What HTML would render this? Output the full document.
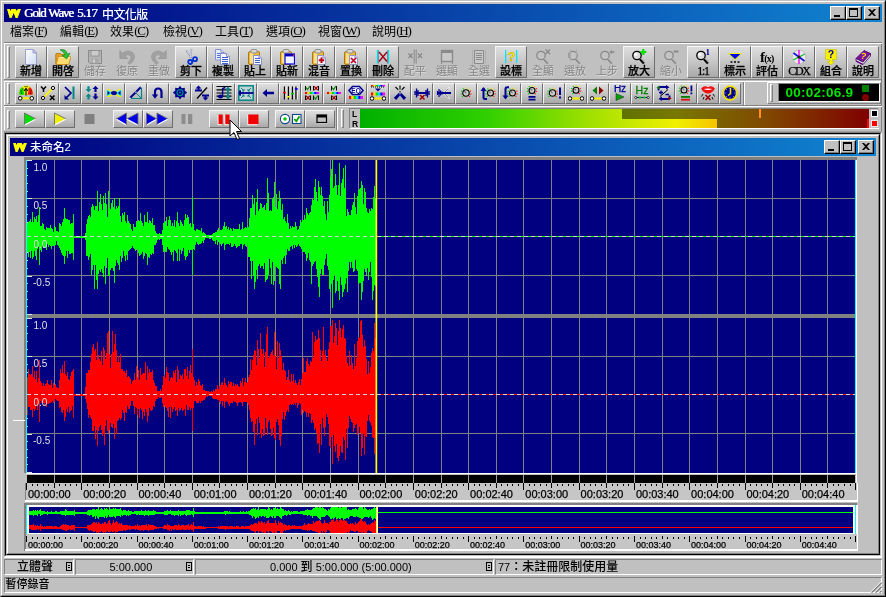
<!DOCTYPE html><html lang="zh-Hant"><head><meta charset="utf-8"><title>GoldWave 5.17</title><style>
html,body{margin:0;padding:0;}
body{width:886px;height:597px;overflow:hidden;background:#c0c0c0;position:relative;
 font-family:"Liberation Serif","Noto Serif CJK SC",serif;font-size:12px;color:#000;}
div,span,svg{position:absolute;box-sizing:border-box;}
.t{white-space:nowrap;line-height:1;}
.sans{font-family:"Liberation Sans","Noto Sans CJK TC",sans-serif;}
.raised{border:1px solid;border-color:#fff #404040 #404040 #fff;}
.btn1{background:linear-gradient(#dedede,#c8c8c8 45%,#a9a9a9);border:1px solid;border-color:#f4f4f4 #6e6e6e #6e6e6e #f4f4f4;}
.cap{background:#c0c0c0;border:1px solid;border-color:#fff #000 #000 #fff;box-shadow:inset -1px -1px 0 #808080;}
.lab{left:0;width:100%;text-align:center;font-size:11px;line-height:12px;white-space:nowrap;font-family:"Liberation Serif","Noto Sans CJK TC",sans-serif;font-weight:500;-webkit-text-stroke:0.25px currentColor;}
.dis{color:#848484;font-weight:400 !important;-webkit-text-stroke:0 !important;text-shadow:0.6px 0.6px 0 #dcdcdc;}
u{text-decoration:underline;}
.cj{font-family:"Liberation Serif","Noto Sans CJK TC",sans-serif;font-weight:400;}
</style></head><body><div id="w" style="left:0;top:0;width:886px;height:597px;will-change:transform;">
<div style="left:0px;top:0px;width:886px;height:597px;border:1px solid;border-color:#c0c0c0 #000 #000 #c0c0c0;"></div>
<div style="left:1px;top:1px;width:884px;height:595px;border:1px solid;border-color:#fff #808080 #808080 #fff;"></div>
<div style="left:4px;top:4px;width:878px;height:18px;background:linear-gradient(90deg,#000080,#1084d0);"></div>
<svg style="left:6px;top:6px" width="16" height="14" viewBox="0 0 16 14"><path d="M1 3 L3.8 3 L4.6 5 L5.4 3 L9.8 3 L10.8 5 L11.8 3 L15 3 L11.6 12 L9.6 12 L7.7 7 L5.6 12 L3.6 12 Z" fill="#ffff00"/></svg>
<div class="t" style="left:24px;top:5px;color:#fff;font-size:13px;line-height:15px;white-space:pre;text-shadow:0.5px 0 0 #fff;"><span style="left:0;letter-spacing:-1.2px">Gold </span><span style="left:24px;letter-spacing:-1.1px">Wave </span><span style="left:53px;letter-spacing:-0.7px">5.17 </span><span style="left:78px;top:1px;font-size:12px;letter-spacing:-0.6px;font-family:'Noto Sans CJK TC',sans-serif;font-weight:500;text-shadow:none">中文化版</span></div>
<div class="cap" style="left:830px;top:6px;width:16px;height:14px;"><div style="left:3px;top:8px;width:6px;height:2px;background:#000"></div></div><div class="cap" style="left:846px;top:6px;width:16px;height:14px;"><div style="left:2px;top:1px;width:9px;height:9px;border:1px solid #000;border-top-width:2px"></div></div><div class="cap" style="left:864px;top:6px;width:16px;height:14px;"><svg style="left:3px;top:2px" width="8" height="7" viewBox="0 0 8 7"><path d="M0 0h2l2 2 2-2h2l-3 3.5 3 3.5h-2l-2-2-2 2h-2l3-3.5z" fill="#000"/></svg></div>
<div class="t" style="left:10px;top:25px;font-size:12px;line-height:14px;"><span class="cj" style="left:0">檔案</span><span style="left:24.3px;top:-1px;font-size:13px;letter-spacing:-1.3px">(<u>F</u>)</span></div>
<div class="t" style="left:60px;top:25px;font-size:12px;line-height:14px;"><span class="cj" style="left:0">編輯</span><span style="left:24.3px;top:-1px;font-size:13px;letter-spacing:-1.3px">(<u>E</u>)</span></div>
<div class="t" style="left:110px;top:25px;font-size:12px;line-height:14px;"><span class="cj" style="left:0">效果</span><span style="left:24.3px;top:-1px;font-size:13px;letter-spacing:-1.3px">(<u>C</u>)</span></div>
<div class="t" style="left:163px;top:25px;font-size:12px;line-height:14px;"><span class="cj" style="left:0">檢視</span><span style="left:24.3px;top:-1px;font-size:13px;letter-spacing:-1.3px">(<u>V</u>)</span></div>
<div class="t" style="left:215px;top:25px;font-size:12px;line-height:14px;"><span class="cj" style="left:0">工具</span><span style="left:24.3px;top:-1px;font-size:13px;letter-spacing:-1.3px">(<u>T</u>)</span></div>
<div class="t" style="left:266px;top:25px;font-size:12px;line-height:14px;"><span class="cj" style="left:0">選項</span><span style="left:24.3px;top:-1px;font-size:13px;letter-spacing:-1.3px">(<u>O</u>)</span></div>
<div class="t" style="left:318px;top:25px;font-size:12px;line-height:14px;"><span class="cj" style="left:0">視窗</span><span style="left:24.3px;top:-1px;font-size:13px;letter-spacing:-1.3px">(<u>W</u>)</span></div>
<div class="t" style="left:372px;top:25px;font-size:12px;line-height:14px;"><span class="cj" style="left:0">說明</span><span style="left:24.3px;top:-1px;font-size:13px;letter-spacing:-1.3px">(<u>H</u>)</span></div>
<div style="left:4px;top:42px;width:878px;height:1px;background:#808080"></div>
<div style="left:4px;top:43px;width:878px;height:1px;background:#fff"></div>
<div style="left:7px;top:46px;width:3px;height:32px;border:1px solid;border-color:#fff #808080 #808080 #fff;"></div>
<div class="btn1" style="left:15px;top:46px;width:32px;height:32px;"><div style="left:-1px;top:-1px;width:32px;height:32px"><svg style="left:8px;top:3px" width="16" height="16" viewBox="0 0 16 16"><defs><linearGradient id="pg" x1="0" y1="0" x2="1" y2="1"><stop offset="0" stop-color="#ffffff"/><stop offset="1" stop-color="#cfdcf4"/></linearGradient></defs><path d="M2.5 0.5H10L13.5 4V15.5H2.5Z" fill="url(#pg)" stroke="#9aa0d0" stroke-width="1"/><path d="M10 0.5V4H13.5Z" fill="#c8d0e8" stroke="#9aa0d0" stroke-width="1"/></svg><div class="lab" style="top:19px">新增</div></div></div>
<div class="btn1" style="left:47px;top:46px;width:32px;height:32px;"><div style="left:-1px;top:-1px;width:32px;height:32px"><svg style="left:8px;top:3px" width="16" height="16" viewBox="0 0 16 16"><path d="M0.8 5.5Q0.8 4.5 1.8 4.5H5.5L6.8 5.8H12.5Q13.5 5.8 13.5 6.8V14.5Q13.5 15.5 12.5 15.5H1.8Q0.8 15.5 0.8 14.5Z" fill="#e8a020" stroke="#b07810" stroke-width="0.9"/><path d="M1.2 15.5L3 8.5Q3.3 7.8 4 7.8H16L13.8 15Q13.6 15.5 12.8 15.5Z" fill="#ffdc70" stroke="#c08818" stroke-width="0.8"/><path d="M3.8 8.6H14.8" stroke="#fff4c0" stroke-width="0.8"/><path d="M5 0.8Q11 -0.5 12.3 5L15 4.2L11.6 10L7 6.6L9.8 5.8Q9 2.5 5 0.8Z" fill="#30c030" stroke="#108010" stroke-width="0.6"/></svg><div class="lab" style="top:19px">開啓</div></div></div>
<div style="left:79px;top:46px;width:32px;height:32px;"><svg style="left:8px;top:3px" width="16" height="16" viewBox="0 0 16 16"><path d="M1.5 1.5H14.5V14.5H3L1.5 13Z" fill="#b4b4b4" stroke="#8a8a8a" stroke-width="1"/><rect x="4" y="1.5" width="8" height="5.5" fill="#cccccc" stroke="#8a8a8a" stroke-width="0.8"/><rect x="4.5" y="9.5" width="7" height="5" fill="#a8a8a8"/><rect x="6" y="10.5" width="2" height="3" fill="#d0d0d0"/></svg><div class="lab dis" style="top:19px">儲存</div></div>
<div style="left:111px;top:46px;width:32px;height:32px;"><svg style="left:8px;top:3px" width="16" height="16" viewBox="0 0 16 16"><path d="M0.8 1.5V9.5H8.8L6 6.9Q9 4.6 11.3 6.8Q13.4 9.4 8.8 13.8L10.6 15.6Q18.5 8.8 13.8 3.8Q9.2 -0.2 3.4 4.2Z" fill="#a2a2a2" stroke="#8a8a8a" stroke-width="0.5"/></svg><div class="lab dis" style="top:19px">復原</div></div>
<div style="left:143px;top:46px;width:32px;height:32px;"><svg style="left:8px;top:3px" width="16" height="16" viewBox="0 0 16 16"><path d="M15.2 1.5V9.5H7.2L10 6.9Q7 4.6 4.7 6.8Q2.6 9.4 7.2 13.8L5.4 15.6Q-2.5 8.8 2.2 3.8Q6.8 -0.2 12.6 4.2Z" fill="#a2a2a2" stroke="#8a8a8a" stroke-width="0.5"/></svg><div class="lab dis" style="top:19px">重做</div></div>
<div class="btn1" style="left:175px;top:46px;width:32px;height:32px;"><div style="left:-1px;top:-1px;width:32px;height:32px"><svg style="left:8px;top:3px" width="16" height="16" viewBox="0 0 16 16"><path d="M3.3 1.5L9.3 9" stroke="#8890a8" stroke-width="1.8"/><path d="M3.8 1.8L9.2 8.5" stroke="#f8f8ff" stroke-width="0.8"/><path d="M8.4 0L7.4 9" stroke="#8890a8" stroke-width="1.8"/><path d="M8.2 0.5L7.5 8.5" stroke="#f8f8ff" stroke-width="0.8"/><circle cx="7.2" cy="13" r="2" fill="none" stroke="#0030d0" stroke-width="1.8"/><circle cx="12" cy="10.2" r="2" fill="none" stroke="#0030d0" stroke-width="1.8"/></svg><div class="lab" style="top:19px">剪下</div></div></div>
<div class="btn1" style="left:207px;top:46px;width:32px;height:32px;"><div style="left:-1px;top:-1px;width:32px;height:32px"><svg style="left:8px;top:3px" width="16" height="16" viewBox="0 0 16 16"><path d="M0.5 0.5H6.0L9.0 3.5V11.0H0.5Z" fill="#e4ecff" stroke="#8890d0" stroke-width="1"/><path d="M6.0 0.5V3.5H9.0" fill="#dfe4f4" stroke="#8890d0" stroke-width="1"/><rect x="2" y="4" width="4" height="1" fill="#5070d8"/><rect x="2" y="6" width="4" height="1" fill="#5070d8"/><rect x="2" y="8" width="4" height="1" fill="#5070d8"/><path d="M5.5 4.5H11.5L14.5 7.5V15.5H5.5Z" fill="#f4f8ff" stroke="#8890d0" stroke-width="1"/><path d="M11.5 4.5V7.5H14.5" fill="#dfe4f4" stroke="#8890d0" stroke-width="1"/><rect x="7" y="8" width="6" height="1" fill="#4060d0"/><rect x="7" y="10" width="6" height="1" fill="#4060d0"/><rect x="7" y="12" width="6" height="1" fill="#4060d0"/><rect x="7" y="14" width="6" height="1" fill="#4060d0"/></svg><div class="lab" style="top:19px">複製</div></div></div>
<div class="btn1" style="left:239px;top:46px;width:32px;height:32px;"><div style="left:-1px;top:-1px;width:32px;height:32px"><svg style="left:8px;top:3px" width="16" height="16" viewBox="0 0 16 16"><rect x="1.5" y="2.5" width="11" height="13" rx="1.5" fill="#f0b838" stroke="#a87818" stroke-width="1"/><rect x="3" y="4" width="3" height="10" fill="#ffe9a0" opacity="0.8"/><rect x="4" y="0.5" width="6" height="3.5" rx="1" fill="#d8d8d8" stroke="#909090" stroke-width="1"/><path d="M6.5 6.5H12.0L14.5 9.0V15.5H6.5Z" fill="#f4f8ff" stroke="#8890d0" stroke-width="1"/><path d="M12.0 6.5V9.0H14.5" fill="#dfe4f4" stroke="#8890d0" stroke-width="1"/><rect x="8" y="9" width="5" height="1" fill="#4060d0"/><rect x="8" y="11" width="5" height="1" fill="#4060d0"/><rect x="8" y="13" width="5" height="1" fill="#4060d0"/></svg><div class="lab" style="top:19px">貼上</div></div></div>
<div class="btn1" style="left:271px;top:46px;width:32px;height:32px;"><div style="left:-1px;top:-1px;width:32px;height:32px"><svg style="left:8px;top:3px" width="16" height="16" viewBox="0 0 16 16"><rect x="1.5" y="2.5" width="11" height="13" rx="1.5" fill="#f0b838" stroke="#a87818" stroke-width="1"/><rect x="3" y="4" width="3" height="10" fill="#ffe9a0" opacity="0.8"/><rect x="4" y="0.5" width="6" height="3.5" rx="1" fill="#d8d8d8" stroke="#909090" stroke-width="1"/><rect x="6" y="5" width="9.5" height="10" fill="#f0f4ff" stroke="#0000f0" stroke-width="1.2"/><rect x="6" y="5" width="9.5" height="2.4" fill="#0000c0"/><rect x="14" y="5.5" width="1.4" height="1.4" fill="#ff3030"/></svg><div class="lab" style="top:19px">貼新</div></div></div>
<div class="btn1" style="left:303px;top:46px;width:32px;height:32px;"><div style="left:-1px;top:-1px;width:32px;height:32px"><svg style="left:8px;top:3px" width="16" height="16" viewBox="0 0 16 16"><rect x="1.5" y="2.5" width="11" height="13" rx="1.5" fill="#f0b838" stroke="#a87818" stroke-width="1"/><rect x="3" y="4" width="3" height="10" fill="#ffe9a0" opacity="0.8"/><rect x="4" y="0.5" width="6" height="3.5" rx="1" fill="#d8d8d8" stroke="#909090" stroke-width="1"/><path d="M6.5 6.5H12.0L14.5 9.0V15.5H6.5Z" fill="#f0f0fa" stroke="#9098c8" stroke-width="1"/><path d="M12.0 6.5V9.0H14.5" fill="#dfe4f4" stroke="#9098c8" stroke-width="1"/><path d="M10.5 8.5V14M7.8 11.2H13.2" stroke="#c00010" stroke-width="2"/></svg><div class="lab" style="top:19px">混音</div></div></div>
<div class="btn1" style="left:335px;top:46px;width:32px;height:32px;"><div style="left:-1px;top:-1px;width:32px;height:32px"><svg style="left:8px;top:3px" width="16" height="16" viewBox="0 0 16 16"><rect x="1.5" y="2.5" width="11" height="13" rx="1.5" fill="#f0b838" stroke="#a87818" stroke-width="1"/><rect x="3" y="4" width="3" height="10" fill="#ffe9a0" opacity="0.8"/><rect x="4" y="0.5" width="6" height="3.5" rx="1" fill="#d8d8d8" stroke="#909090" stroke-width="1"/><path d="M6.5 6.5H12.0L14.5 9.0V15.5H6.5Z" fill="#f0f0fa" stroke="#9098c8" stroke-width="1"/><path d="M12.0 6.5V9.0H14.5" fill="#dfe4f4" stroke="#9098c8" stroke-width="1"/><path d="M8 9L13 14M13 9L8 14" stroke="#c00020" stroke-width="1.6"/></svg><div class="lab" style="top:19px">置換</div></div></div>
<div class="btn1" style="left:367px;top:46px;width:32px;height:32px;"><div style="left:-1px;top:-1px;width:32px;height:32px"><svg style="left:8px;top:3px" width="16" height="16" viewBox="0 0 16 16"><path d="M4 3L12 12.5M12 3L4 12.5" stroke="#a00010" stroke-width="1.4"/><rect x="1.8" y="1" width="1.3" height="13.5" fill="#00e8f0"/><rect x="12.9" y="1" width="1.3" height="13.5" fill="#00e8f0"/><path d="M3.4 1V14.5M12.6 1V14.5" stroke="#203080" stroke-width="0.5"/></svg><div class="lab" style="top:19px">刪除</div></div></div>
<div style="left:399px;top:46px;width:32px;height:32px;"><svg style="left:8px;top:3px" width="16" height="16" viewBox="0 0 16 16"><path d="M7.2 0.5V14.5M9.2 0.5V14.5" stroke="#8a8a8a" stroke-width="1"/><path d="M1.5 4.5L5.5 9M5.5 4.5L1.5 9M11 4.5L15 9M15 4.5L11 9" stroke="#8a8a8a" stroke-width="1.3"/></svg><div class="lab dis" style="top:19px">配平</div></div>
<div style="left:431px;top:46px;width:32px;height:32px;"><svg style="left:8px;top:3px" width="16" height="16" viewBox="0 0 16 16"><rect x="2.5" y="1.5" width="11" height="11" fill="#c8c8c8" stroke="#8a8a8a" stroke-width="1.4"/><rect x="2.5" y="1.5" width="11" height="2.5" fill="#8a8a8a"/><path d="M2.5 12V15M13.5 12V15" stroke="#8a8a8a" stroke-width="1"/></svg><div class="lab dis" style="top:19px">選顯</div></div>
<div style="left:463px;top:46px;width:32px;height:32px;"><svg style="left:8px;top:3px" width="16" height="16" viewBox="0 0 16 16"><path d="M3.5 1.5H12.5V14.5H3.5Z" fill="#c8c8c8" stroke="#8a8a8a" stroke-width="1"/><rect x="5" y="4" width="6" height="1" fill="#8a8a8a"/><rect x="5" y="6" width="6" height="1" fill="#8a8a8a"/><rect x="5" y="8" width="6" height="1" fill="#8a8a8a"/><rect x="5" y="10" width="6" height="1" fill="#8a8a8a"/><path d="M1.5 0.5V15M14.5 0.5V15" stroke="#b0b0b0" stroke-width="1"/></svg><div class="lab dis" style="top:19px">全選</div></div>
<div class="btn1" style="left:495px;top:46px;width:32px;height:32px;"><div style="left:-1px;top:-1px;width:32px;height:32px"><svg style="left:8px;top:3px" width="16" height="16" viewBox="0 0 16 16"><rect x="2" y="1" width="1.3" height="13" fill="#00e8f0"/><rect x="13" y="1" width="1.3" height="13" fill="#00e8f0"/><text x="8.2" y="11.5" text-anchor="middle" font-family="Liberation Sans, sans-serif" font-weight="bold" font-size="13" fill="#f8f000" stroke="#807800" stroke-width="0.25">?</text></svg><div class="lab" style="top:19px">設標</div></div></div>
<div style="left:527px;top:46px;width:32px;height:32px;"><svg style="left:8px;top:3px" width="16" height="16" viewBox="0 0 16 16"><circle cx="6" cy="6.5" r="4.2" fill="#c4c4c4" stroke="#8a8a8a" stroke-width="1.3"/><path d="M9 10L13 14.5" stroke="#8a8a8a" stroke-width="2.6" stroke-linecap="butt"/><path d="M9.3 9.3L13.6 13.9" stroke="#fff" stroke-width="0.7" opacity="0.7"/><path d="M10.5 0.5L15 5M15 0.5L10.5 5" stroke="#8a8a8a" stroke-width="1.4"/></svg><div class="lab dis" style="top:19px">全顯</div></div>
<div style="left:559px;top:46px;width:32px;height:32px;"><svg style="left:8px;top:3px" width="16" height="16" viewBox="0 0 16 16"><circle cx="6" cy="6.5" r="4.2" fill="#c4c4c4" stroke="#8a8a8a" stroke-width="1.3"/><path d="M9 10L13 14.5" stroke="#8a8a8a" stroke-width="2.6" stroke-linecap="butt"/><path d="M9.3 9.3L13.6 13.9" stroke="#fff" stroke-width="0.7" opacity="0.7"/><path d="M3.5 0.5V12M9.5 0.5V8" stroke="#acacac" stroke-width="1.2"/></svg><div class="lab dis" style="top:19px">選放</div></div>
<div style="left:591px;top:46px;width:32px;height:32px;"><svg style="left:8px;top:3px" width="16" height="16" viewBox="0 0 16 16"><circle cx="6" cy="6.5" r="4.2" fill="#c4c4c4" stroke="#8a8a8a" stroke-width="1.3"/><path d="M9 10L13 14.5" stroke="#8a8a8a" stroke-width="2.6" stroke-linecap="butt"/><path d="M9.3 9.3L13.6 13.9" stroke="#fff" stroke-width="0.7" opacity="0.7"/><path d="M10.5 3L13 0.8V2.2H15.5V3.8H13V5.2Z" fill="#8a8a8a"/></svg><div class="lab dis" style="top:19px">上步</div></div>
<div class="btn1" style="left:623px;top:46px;width:32px;height:32px;"><div style="left:-1px;top:-1px;width:32px;height:32px"><svg style="left:8px;top:3px" width="16" height="16" viewBox="0 0 16 16"><circle cx="6" cy="6.5" r="4.2" fill="#dcdcdc" stroke="#000" stroke-width="1.3"/><path d="M9 10L13 14.5" stroke="#000" stroke-width="2.6" stroke-linecap="butt"/><path d="M9.3 9.3L13.6 13.9" stroke="#fff" stroke-width="0.7" opacity="0.7"/><circle cx="4.7" cy="5.2" r="1.6" fill="#fff"/><path d="M12.3 0V6M9.3 3H15.3" stroke="#00e000" stroke-width="2.2"/></svg><div class="lab" style="top:19px">放大</div></div></div>
<div style="left:655px;top:46px;width:32px;height:32px;"><svg style="left:8px;top:3px" width="16" height="16" viewBox="0 0 16 16"><circle cx="6" cy="6.5" r="4.2" fill="#c4c4c4" stroke="#8a8a8a" stroke-width="1.3"/><path d="M9 10L13 14.5" stroke="#8a8a8a" stroke-width="2.6" stroke-linecap="butt"/><path d="M9.3 9.3L13.6 13.9" stroke="#fff" stroke-width="0.7" opacity="0.7"/><rect x="10.5" y="1.5" width="5" height="2" fill="#8a8a8a"/></svg><div class="lab dis" style="top:19px">縮小</div></div>
<div class="btn1" style="left:687px;top:46px;width:32px;height:32px;"><div style="left:-1px;top:-1px;width:32px;height:32px"><svg style="left:8px;top:3px" width="16" height="16" viewBox="0 0 16 16"><circle cx="6" cy="6.5" r="4.2" fill="#dcdcdc" stroke="#000" stroke-width="1.3"/><path d="M9 10L13 14.5" stroke="#000" stroke-width="2.6" stroke-linecap="butt"/><path d="M9.3 9.3L13.6 13.9" stroke="#fff" stroke-width="0.7" opacity="0.7"/><circle cx="4.7" cy="5.2" r="1.6" fill="#fff"/><text x="12.8" y="5.6" text-anchor="middle" font-family="Liberation Serif, serif" font-weight="bold" font-size="9" fill="#000090">1</text></svg><div class="lab" style="top:19px;font-size:12px;letter-spacing:-1.3px">1:1</div></div></div>
<div class="btn1" style="left:719px;top:46px;width:32px;height:32px;"><div style="left:-1px;top:-1px;width:32px;height:32px"><svg style="left:8px;top:3px" width="16" height="16" viewBox="0 0 16 16"><path d="M1.5 4.5H14.5L8 10.5Z" fill="#0000f0" stroke="#f0f000" stroke-width="1"/><path d="M3.5 13H5.5M7 13H9M10.5 13H12.5" stroke="#000" stroke-width="1.6"/></svg><div class="lab" style="top:19px">標示</div></div></div>
<div class="btn1" style="left:751px;top:46px;width:32px;height:32px;"><div style="left:-1px;top:-1px;width:32px;height:32px"><svg style="left:8px;top:3px" width="16" height="16" viewBox="0 0 16 16"><text x="1" y="12.5" font-family="Liberation Serif, serif" font-weight="bold" font-size="15" fill="#000">f</text><text x="5.2" y="12.5" font-family="Liberation Serif, serif" font-weight="bold" font-size="10" fill="#000" letter-spacing="-0.8">(x)</text></svg><div class="lab" style="top:19px">評估</div></div></div>
<div class="btn1" style="left:783px;top:46px;width:32px;height:32px;"><div style="left:-1px;top:-1px;width:32px;height:32px"><svg style="left:8px;top:3px" width="16" height="16" viewBox="0 0 16 16"><circle cx="8" cy="8" r="7" fill="#e8e8ec" stroke="#b0b0b8" stroke-width="0.8"/><path d="M8 1V15" stroke="#f020f0" stroke-width="1.6"/><path d="M2.5 4L13.5 12" stroke="#1010e0" stroke-width="1.6"/><path d="M13.8 5L2.2 11" stroke="#10c030" stroke-width="1.4"/><circle cx="8" cy="8" r="1.5" fill="#202020"/></svg><div class="lab" style="top:19px;font-size:12px;letter-spacing:-1.3px">CDX</div></div></div>
<div class="btn1" style="left:815px;top:46px;width:32px;height:32px;"><div style="left:-1px;top:-1px;width:32px;height:32px"><svg style="left:8px;top:3px" width="16" height="16" viewBox="0 0 16 16"><path d="M2.5 0.5H13.5V10.5H9.5V12.5H11.8L8 16L4.2 12.5H6.5V10.5H2.5Z" fill="#f8f000" stroke="#c0b800" stroke-width="0.5"/><text x="8" y="9" text-anchor="middle" font-family="Liberation Sans, sans-serif" font-weight="bold" font-size="10.5" fill="#0000a0">?</text></svg><div class="lab" style="top:19px">組合</div></div></div>
<div class="btn1" style="left:847px;top:46px;width:32px;height:32px;"><div style="left:-1px;top:-1px;width:32px;height:32px"><svg style="left:8px;top:3px" width="16" height="16" viewBox="0 0 16 16"><path d="M1 9.5L9 1.5L15.5 4.5L8 13Z" fill="#8010a0" stroke="#400060" stroke-width="0.8"/><path d="M1 9.5L8 13L15.5 4.5V7L8 15.5L1 12Z" fill="#d8d8e0" stroke="#400060" stroke-width="0.8"/><path d="M1 12L8 15.5" stroke="#600080" stroke-width="1.2"/><text x="8.5" y="10" text-anchor="middle" font-family="Liberation Sans, sans-serif" font-weight="bold" font-size="9" fill="#f8e000" transform="rotate(15 8.5 7)">?</text></svg><div class="lab" style="top:19px">說明</div></div></div>
<div style="left:4px;top:79px;width:878px;height:1px;background:#808080"></div>
<div style="left:4px;top:81px;width:878px;height:1px;background:#fff"></div>
<div style="left:4px;top:44px;width:1px;height:35px;background:#fff"></div>
<div style="left:4px;top:81px;width:1px;height:24px;background:#fff"></div>
<div style="left:4px;top:106px;width:1px;height:24px;background:#fff"></div>
<div style="left:881px;top:44px;width:1px;height:87px;background:#808080"></div>
<div style="left:4px;top:131px;width:878px;height:1px;background:#a0a0a0"></div>
<div style="left:7px;top:83px;width:3px;height:21px;border:1px solid;border-color:#fff #808080 #808080 #fff;"></div>
<div class="btn1" style="left:15px;top:83px;width:22px;height:21px;"><svg style="left:2px;top:1px" width="16" height="16" viewBox="0 0 16 16"><path d="M1.3 9.8V7.2A6.7 6.7 0 0 1 14.7 7.2V9.8Z" fill="#f8f000"/><path d="M1.3 9.8V7.2A6.7 6.7 0 0 1 4.4 1.8L6.6 9.8Z" fill="#00e000"/><path d="M14.7 9.8V7.2A6.7 6.7 0 0 0 11.6 1.8L9.4 9.8Z" fill="#ff1010"/><path d="M8 10.5V4" stroke="#000" stroke-width="1.1"/><path d="M6 6L8 3.4L10 6" stroke="#000" stroke-width="1.1" fill="none"/><path d="M2.6 6h1M3 8.3h1M4.6 4h1M6.6 1.6h1M8.6 1.6h1M10.4 4h1M12.4 6h1M12 8.3h1" stroke="#000" stroke-width="1"/><path d="M2.2 13.3H13.8" stroke="#f8f000" stroke-width="2"/><circle cx="2.2" cy="13.3" r="1.8" fill="#fff" stroke="#000" stroke-width="1"/><circle cx="13.8" cy="13.3" r="1.8" fill="#fff" stroke="#000" stroke-width="1"/></svg></div>
<div class="btn1" style="left:37px;top:83px;width:22px;height:21px;"><svg style="left:2px;top:1px" width="16" height="16" viewBox="0 0 16 16"><path d="M3 13L13 3" stroke="#f8f000" stroke-width="1.8"/><circle cx="3" cy="13" r="1.6" fill="#fff" stroke="#000" stroke-width="1"/><circle cx="13" cy="3" r="1.6" fill="#fff" stroke="#000" stroke-width="1"/><path d="M1 1.5L3.5 4.2L6 1.5M3.5 4.2V7" stroke="#000" stroke-width="1.5" fill="none"/><path d="M10 10.5L14.5 15M14.5 10.5L10 15" stroke="#000" stroke-width="1.6"/></svg></div>
<div class="btn1" style="left:59px;top:83px;width:22px;height:21px;"><svg style="left:2px;top:1px" width="16" height="16" viewBox="0 0 16 16"><path d="M3 2L9 8L3.5 13.5" stroke="#000090" stroke-width="1.7" fill="none"/><path d="M2.5 10V14.5H7Z" fill="#000090"/><rect x="10.5" y="1.5" width="2" height="12.5" fill="#008888"/></svg></div>
<div class="btn1" style="left:81px;top:83px;width:22px;height:21px;"><svg style="left:2px;top:1px" width="16" height="16" viewBox="0 0 16 16"><path d="M4.5 7.3L7.5 4.3H5.6V1.2999999999999998H3.4V4.3H1.5Z" fill="#008888"/><path d="M4.5 8.4L7.5 11.4H5.6V14.4H3.4V11.4H1.5Z" fill="#008888"/><path d="M11.5 0.8L14.5 4.0H12.6V7.0H10.4V4.0H8.5Z" fill="#000090"/><path d="M11.5 14.8L14.5 11.600000000000001H12.6V8.600000000000001H10.4V11.600000000000001H8.5Z" fill="#000090"/></svg></div>
<div class="btn1" style="left:103px;top:83px;width:22px;height:21px;"><svg style="left:2px;top:1px" width="16" height="16" viewBox="0 0 16 16"><path d="M1 4Q4.5 8 8 8Q11.5 8 15 4V12Q11.5 8 8 8Q4.5 8 1 12Z" fill="#00e8f0"/><path d="M1 4.5Q5 4.5 8 8Q11 11.5 15 11.5M1 11.5Q5 11.5 8 8Q11 4.5 15 4.5" stroke="#f0f000" stroke-width="1.2" fill="none"/><ellipse cx="8" cy="8" rx="3" ry="2" fill="#000090"/><path d="M1.5 6V10L4 8ZM14.5 6V10L12 8Z" fill="#000090"/></svg></div>
<div class="btn1" style="left:125px;top:83px;width:22px;height:21px;"><svg style="left:2px;top:1px" width="16" height="16" viewBox="0 0 16 16"><path d="M2 13.5H13.5V2" stroke="#008888" stroke-width="1.2" fill="none"/><path d="M8 8L13.5 13.5" stroke="#008888" stroke-width="1"/><path d="M2 13L13 2" stroke="#000090" stroke-width="2"/><rect x="1.3" y="12.6" width="1.4" height="1.4" fill="#fff"/><rect x="7.3" y="6.6" width="1.2" height="1.2" fill="#fff"/><rect x="12.6" y="1.4" width="1.2" height="1.2" fill="#fff"/></svg></div>
<div class="btn1" style="left:147px;top:83px;width:22px;height:21px;"><svg style="left:2px;top:1px" width="16" height="16" viewBox="0 0 16 16"><path d="M5 11V7Q5 3.5 8.2 3.5Q11.5 3.5 11.5 7V13" stroke="#000090" stroke-width="2.2" fill="none"/><path d="M1.8 9.5H8.2L5 13.8Z" fill="#000090"/></svg></div>
<div class="btn1" style="left:169px;top:83px;width:22px;height:21px;"><svg style="left:2px;top:1px" width="16" height="16" viewBox="0 0 16 16"><path d="M8 0.8L9.8 3.2L12.8 2.8L12.8 5.8L15.2 7.5L12.8 9.4L12.8 12.4L9.8 12L8 14.4L6.2 12L3.2 12.4L3.2 9.4L0.8 7.5L3.2 5.8L3.2 2.8L6.2 3.2Z" fill="#000090"/><circle cx="8" cy="7.6" r="3" fill="none" stroke="#008888" stroke-width="1.2"/><circle cx="8" cy="7.6" r="1" fill="#008888"/></svg></div>
<div class="btn1" style="left:191px;top:83px;width:22px;height:21px;"><svg style="left:2px;top:1px" width="16" height="16" viewBox="0 0 16 16"><path d="M3 13.5L13 2.5" stroke="#000" stroke-width="1.3"/><path d="M4.5 0.5L7.5 3.5H5.5V4.5H8V6.5H1V4.5H3.5V3.5H1.5Z" fill="#000090"/><path d="M11.5 15.5L8.5 12.5H10.5V11.5H8V9.5H15V11.5H12.5V12.5H14.5Z" fill="#000090"/></svg></div>
<div class="btn1" style="left:213px;top:83px;width:22px;height:21px;"><svg style="left:2px;top:1px" width="16" height="16" viewBox="0 0 16 16"><path d="M0.5 1.5H15.5M0.5 4.8H15.5M0.5 8H15.5M0.5 11.2H15.5M0.5 14.5H15.5" stroke="#000" stroke-width="1.2"/><ellipse cx="4.5" cy="11.5" rx="2.6" ry="2" fill="#000090"/><path d="M6.6 11.5V3.5L9.5 2.5" stroke="#000090" stroke-width="1.4" fill="none"/><path d="M12 1.5L14.5 4.5H13.0V8.0H11.0V4.5H9.5Z" fill="#008888"/><path d="M12 14.5L14.5 11.5H13.0V8.0H11.0V11.5H9.5Z" fill="#008888"/></svg></div>
<div class="btn1" style="left:235px;top:83px;width:22px;height:21px;"><svg style="left:2px;top:1px" width="16" height="16" viewBox="0 0 16 16"><rect x="0.8" y="0.8" width="14.4" height="14.4" fill="#c8d4d4" stroke="#008888" stroke-width="1.5"/><path d="M3 3L6 6M13 3L10 6M3 13L6 10M13 13L10 10" stroke="#008888" stroke-width="1"/><path d="M4 6H6V4M12 6H10V4M4 10H6V12M12 10H10V12" stroke="#008888" stroke-width="1" fill="none"/><path d="M0.5 8H15.5" stroke="#000090" stroke-width="1.8"/><path d="M3.5 8L2 5V11Z" fill="#000090"/><path d="M2 5.5V10.5" stroke="#000090" stroke-width="2"/></svg></div>
<div class="btn1" style="left:257px;top:83px;width:22px;height:21px;"><svg style="left:2px;top:1px" width="16" height="16" viewBox="0 0 16 16"><path d="M2.5 8L7 4V6.8H14V9.2H7V12Z" fill="#000090"/></svg></div>
<div class="btn1" style="left:279px;top:83px;width:22px;height:21px;"><svg style="left:2px;top:1px" width="16" height="16" viewBox="0 0 16 16"><path d="M2.5 1.5V14.5M6.5 1.5V14.5M10.5 1.5V14.5M14 1.5V14.5" stroke="#000" stroke-width="1.3"/><path d="M4 1.5V14.5M8 1.5V14.5M12 1.5V14.5M15.3 1.5V14.5" stroke="#fff" stroke-width="0.8"/><rect x="1" y="6.8" width="3" height="1.6" fill="#ff0000"/><rect x="5" y="11" width="3" height="1.6" fill="#f8f000"/><rect x="9" y="7.8" width="3" height="1.6" fill="#00d000"/><rect x="12.8" y="3.2" width="3" height="1.6" fill="#0000f0"/></svg></div>
<div class="btn1" style="left:301px;top:83px;width:22px;height:21px;"><svg style="left:2px;top:1px" width="16" height="16" viewBox="0 0 16 16"><path d="M1.5 1V5.5M6.5 1V5.5" stroke="#000" stroke-width="1"/><path d="M2.0 2.5L3.5 4.5L6.0 1" stroke="#008000" stroke-width="1.2" fill="none"/><path d="M9.5 1V5.5M14.5 1V5.5" stroke="#000" stroke-width="1"/><path d="M10.2 1.3L13.8 5.2M13.8 1.3L10.2 5.2" stroke="#a00000" stroke-width="1.2" fill="none"/><rect x="1.00" y="7" width="2.38" height="2" fill="#ff0000"/><rect x="3.33" y="7" width="2.38" height="2" fill="#ffe000"/><rect x="5.67" y="7" width="2.38" height="2" fill="#00e000"/><rect x="8.00" y="7" width="2.38" height="2" fill="#00d8ff"/><rect x="10.33" y="7" width="2.38" height="2" fill="#0000ff"/><rect x="12.67" y="7" width="2.38" height="2" fill="#ff00ff"/><path d="M1.5 10.5V15.0M6.5 10.5V15.0" stroke="#000" stroke-width="1"/><path d="M2.2 10.8L5.8 14.7M5.8 10.8L2.2 14.7" stroke="#a00000" stroke-width="1.2" fill="none"/><path d="M9.5 10.5V15.0M14.5 10.5V15.0" stroke="#000" stroke-width="1"/><path d="M10.0 12.0L11.5 14.0L14.0 10.5" stroke="#008000" stroke-width="1.2" fill="none"/></svg></div>
<div class="btn1" style="left:323px;top:83px;width:22px;height:21px;"><svg style="left:2px;top:1px" width="16" height="16" viewBox="0 0 16 16"><path d="M5.5 1V5.5M10.5 1V5.5" stroke="#000" stroke-width="1"/><path d="M6.0 2.5L7.5 4.5L10.0 1" stroke="#008000" stroke-width="1.2" fill="none"/><rect x="1.00" y="7" width="2.38" height="2" fill="#ff0000"/><rect x="3.33" y="7" width="2.38" height="2" fill="#ffe000"/><rect x="5.67" y="7" width="2.38" height="2" fill="#00e000"/><rect x="8.00" y="7" width="2.38" height="2" fill="#00d8ff"/><rect x="10.33" y="7" width="2.38" height="2" fill="#0000ff"/><rect x="12.67" y="7" width="2.38" height="2" fill="#ff00ff"/><path d="M5.5 10.5V15.0M10.5 10.5V15.0" stroke="#000" stroke-width="1"/><path d="M6.2 10.8L9.8 14.7M9.8 10.8L6.2 14.7" stroke="#a00000" stroke-width="1.2" fill="none"/></svg></div>
<div class="btn1" style="left:345px;top:83px;width:22px;height:21px;"><svg style="left:2px;top:1px" width="16" height="16" viewBox="0 0 16 16"><path d="M1 5.5L4.5 1.5H11.5L15 5.5L11.5 9.5H4.5Z" fill="#fff" stroke="#000090" stroke-width="1.6"/><text x="8" y="8" text-anchor="middle" font-family="Liberation Sans, sans-serif" font-weight="bold" font-size="6.5" fill="#000090">EQ</text><rect x="1.00" y="11" width="2.38" height="3" fill="#ff0000"/><rect x="3.33" y="11" width="2.38" height="3" fill="#ffe000"/><rect x="5.67" y="11" width="2.38" height="3" fill="#00e000"/><rect x="8.00" y="11" width="2.38" height="3" fill="#00d8ff"/><rect x="10.33" y="11" width="2.38" height="3" fill="#0000ff"/><rect x="12.67" y="11" width="2.38" height="3" fill="#ff00ff"/></svg></div>
<div class="btn1" style="left:367px;top:83px;width:22px;height:21px;"><svg style="left:2px;top:1px" width="16" height="16" viewBox="0 0 16 16"><rect x="1.00" y="0" width="2.38" height="1.5" fill="#ff0000"/><rect x="3.33" y="0" width="2.38" height="1.5" fill="#ffe000"/><rect x="5.67" y="0" width="2.38" height="1.5" fill="#00e000"/><rect x="8.00" y="0" width="2.38" height="1.5" fill="#00d8ff"/><rect x="10.33" y="0" width="2.38" height="1.5" fill="#0000ff"/><rect x="12.67" y="0" width="2.38" height="1.5" fill="#ff00ff"/><path d="M1 2H15" stroke="#000" stroke-width="1" stroke-dasharray="1 1"/><path d="M5 3.5H11L8 6.5Z" fill="#000090"/><rect x="1.00" y="7.5" width="2.38" height="3" fill="#ff0000"/><rect x="3.33" y="7.5" width="2.38" height="3" fill="#ffe000"/><rect x="5.67" y="7.5" width="2.38" height="3" fill="#00e000"/><rect x="8.00" y="7.5" width="2.38" height="3" fill="#00d8ff"/><rect x="10.33" y="7.5" width="2.38" height="3" fill="#0000ff"/><rect x="12.67" y="7.5" width="2.38" height="3" fill="#ff00ff"/><path d="M2 13.5H14" stroke="#f8f000" stroke-width="2"/><circle cx="2" cy="13.5" r="1.8" fill="#fff" stroke="#000" stroke-width="1"/><circle cx="14" cy="13.5" r="1.8" fill="#fff" stroke="#000" stroke-width="1"/></svg></div>
<div class="btn1" style="left:389px;top:83px;width:22px;height:21px;"><svg style="left:2px;top:1px" width="16" height="16" viewBox="0 0 16 16"><path d="M8 0.5V4.5M3.5 2L6.3 4.8M12.5 2L9.7 4.8" stroke="#000" stroke-width="1.1"/><path d="M7.2 7.5L1.8 12.8L4.2 15L8 10.5ZM8.8 7.5L14.2 12.8L11.8 15L8 10.5Z" fill="#000090"/><rect x="7.4" y="6" width="1.2" height="1.2" fill="#000"/></svg></div>
<div class="btn1" style="left:411px;top:83px;width:22px;height:21px;"><svg style="left:2px;top:1px" width="16" height="16" viewBox="0 0 16 16"><path d="M2 8H14" stroke="#000090" stroke-width="2"/><path d="M1 6V10M2.5 3.5V12.5M4 5V11M15 6V10M13.5 3.5V12.5M12 5V11" stroke="#000090" stroke-width="1.3"/><path d="M6 10L10.5 14.5M10.5 10L6 14.5" stroke="#a00000" stroke-width="1.6"/></svg></div>
<div class="btn1" style="left:433px;top:83px;width:22px;height:21px;"><svg style="left:2px;top:1px" width="16" height="16" viewBox="0 0 16 16"><path d="M8 8L13.5 2.5M8 8L13.5 13.5" stroke="#fff" stroke-width="1.2"/><path d="M8.5 7.5L12.5 3.5M8.5 8.5L12.5 12.5" stroke="#404040" stroke-width="0.6"/><path d="M1 8H15" stroke="#000090" stroke-width="2"/><path d="M1.5 6V10M3 4V12M4.5 5.5V10.5M6 6.5V9.5" stroke="#000090" stroke-width="1.2"/></svg></div>
<div class="btn1" style="left:455px;top:83px;width:22px;height:21px;"><svg style="left:2px;top:1px" width="16" height="16" viewBox="0 0 16 16"><circle cx="8" cy="8" r="3.1999999999999997" fill="#c8c8c8" stroke="#000" stroke-width="1.1"/><path d="M8 8L6.1 6.1" stroke="#707070" stroke-width="1.1"/><rect x="3.9" y="10.9" width="1.2" height="1.2" fill="#00d000"/><rect x="2.6" y="8.4" width="1.2" height="1.2" fill="#00d000"/><rect x="2.9" y="5.5" width="1.2" height="1.2" fill="#00d000"/><rect x="4.7" y="3.3" width="1.2" height="1.2" fill="#00d000"/><rect x="7.4" y="2.5" width="1.2" height="1.2" fill="#e8e000"/><rect x="10.1" y="3.3" width="1.2" height="1.2" fill="#e8e000"/><rect x="11.9" y="5.5" width="1.2" height="1.2" fill="#ff2000"/><rect x="12.2" y="8.4" width="1.2" height="1.2" fill="#ff2000"/><rect x="10.9" y="10.9" width="1.2" height="1.2" fill="#ff2000"/></svg></div>
<div class="btn1" style="left:477px;top:83px;width:22px;height:21px;"><svg style="left:2px;top:1px" width="16" height="16" viewBox="0 0 16 16"><path d="M3.5 3V12.5Q3.5 14 5.5 14H7" stroke="#000090" stroke-width="2" fill="none"/><path d="M0.5 6L3.5 2L6.5 6Z" fill="#000090"/><circle cx="10.5" cy="8" r="3.0" fill="#c8c8c8" stroke="#000" stroke-width="1.1"/><path d="M10.5 8L8.7 6.2" stroke="#707070" stroke-width="1.1"/><rect x="6.6" y="10.7" width="1.2" height="1.2" fill="#00d000"/><rect x="5.3" y="8.3" width="1.2" height="1.2" fill="#00d000"/><rect x="5.6" y="5.6" width="1.2" height="1.2" fill="#00d000"/><rect x="7.3" y="3.5" width="1.2" height="1.2" fill="#00d000"/><rect x="9.9" y="2.7" width="1.2" height="1.2" fill="#e8e000"/><rect x="12.5" y="3.5" width="1.2" height="1.2" fill="#e8e000"/><rect x="14.2" y="5.6" width="1.2" height="1.2" fill="#ff2000"/><rect x="14.5" y="8.3" width="1.2" height="1.2" fill="#ff2000"/><rect x="13.2" y="10.7" width="1.2" height="1.2" fill="#ff2000"/></svg></div>
<div class="btn1" style="left:499px;top:83px;width:22px;height:21px;"><svg style="left:2px;top:1px" width="16" height="16" viewBox="0 0 16 16"><path d="M3.5 13V4Q3.5 2.2 5.5 2.2H7" stroke="#000090" stroke-width="2" fill="none"/><path d="M0.5 10.5L3.5 14.5L6.5 10.5Z" fill="#000090"/><circle cx="10.5" cy="8" r="3.0" fill="#c8c8c8" stroke="#000" stroke-width="1.1"/><path d="M10.5 8L8.7 6.2" stroke="#707070" stroke-width="1.1"/><rect x="6.6" y="10.7" width="1.2" height="1.2" fill="#00d000"/><rect x="5.3" y="8.3" width="1.2" height="1.2" fill="#00d000"/><rect x="5.6" y="5.6" width="1.2" height="1.2" fill="#00d000"/><rect x="7.3" y="3.5" width="1.2" height="1.2" fill="#00d000"/><rect x="9.9" y="2.7" width="1.2" height="1.2" fill="#e8e000"/><rect x="12.5" y="3.5" width="1.2" height="1.2" fill="#e8e000"/><rect x="14.2" y="5.6" width="1.2" height="1.2" fill="#ff2000"/><rect x="14.5" y="8.3" width="1.2" height="1.2" fill="#ff2000"/><rect x="13.2" y="10.7" width="1.2" height="1.2" fill="#ff2000"/></svg></div>
<div class="btn1" style="left:521px;top:83px;width:22px;height:21px;"><svg style="left:2px;top:1px" width="16" height="16" viewBox="0 0 16 16"><circle cx="8" cy="5.5" r="3.0" fill="#c8c8c8" stroke="#000" stroke-width="1.1"/><path d="M8 5.5L6.2 3.7" stroke="#707070" stroke-width="1.1"/><rect x="4.1" y="8.2" width="1.2" height="1.2" fill="#00d000"/><rect x="2.8" y="5.8" width="1.2" height="1.2" fill="#00d000"/><rect x="3.1" y="3.1" width="1.2" height="1.2" fill="#00d000"/><rect x="4.8" y="1.0" width="1.2" height="1.2" fill="#00d000"/><rect x="7.4" y="0.2" width="1.2" height="1.2" fill="#e8e000"/><rect x="10.0" y="1.0" width="1.2" height="1.2" fill="#e8e000"/><rect x="11.7" y="3.1" width="1.2" height="1.2" fill="#ff2000"/><rect x="12.0" y="5.8" width="1.2" height="1.2" fill="#ff2000"/><rect x="10.7" y="8.2" width="1.2" height="1.2" fill="#ff2000"/><path d="M4.5 11.8H11.5M4.5 14.6H11.5" stroke="#000090" stroke-width="1.8"/></svg></div>
<div class="btn1" style="left:543px;top:83px;width:22px;height:21px;"><svg style="left:2px;top:1px" width="16" height="16" viewBox="0 0 16 16"><circle cx="6.5" cy="8" r="3.1999999999999997" fill="#c8c8c8" stroke="#000" stroke-width="1.1"/><path d="M6.5 8L4.6 6.1" stroke="#707070" stroke-width="1.1"/><rect x="2.4" y="10.9" width="1.2" height="1.2" fill="#00d000"/><rect x="1.1" y="8.4" width="1.2" height="1.2" fill="#00d000"/><rect x="1.4" y="5.5" width="1.2" height="1.2" fill="#00d000"/><rect x="3.2" y="3.3" width="1.2" height="1.2" fill="#00d000"/><rect x="5.9" y="2.5" width="1.2" height="1.2" fill="#e8e000"/><rect x="8.6" y="3.3" width="1.2" height="1.2" fill="#e8e000"/><rect x="10.4" y="5.5" width="1.2" height="1.2" fill="#ff2000"/><rect x="10.7" y="8.4" width="1.2" height="1.2" fill="#ff2000"/><rect x="9.4" y="10.9" width="1.2" height="1.2" fill="#ff2000"/><rect x="13" y="2.5" width="2" height="7.5" fill="#000090"/><rect x="13" y="11.5" width="2" height="2" fill="#000090"/></svg></div>
<div class="btn1" style="left:565px;top:83px;width:22px;height:21px;"><svg style="left:2px;top:1px" width="16" height="16" viewBox="0 0 16 16"><circle cx="8" cy="5.3" r="3.0" fill="#c8c8c8" stroke="#000" stroke-width="1.1"/><path d="M8 5.3L6.2 3.5" stroke="#707070" stroke-width="1.1"/><rect x="4.1" y="8.0" width="1.2" height="1.2" fill="#00d000"/><rect x="2.8" y="5.6" width="1.2" height="1.2" fill="#00d000"/><rect x="3.1" y="2.9" width="1.2" height="1.2" fill="#00d000"/><rect x="4.8" y="0.8" width="1.2" height="1.2" fill="#00d000"/><rect x="7.4" y="-0.0" width="1.2" height="1.2" fill="#e8e000"/><rect x="10.0" y="0.8" width="1.2" height="1.2" fill="#e8e000"/><rect x="11.7" y="2.9" width="1.2" height="1.2" fill="#ff2000"/><rect x="12.0" y="5.6" width="1.2" height="1.2" fill="#ff2000"/><rect x="10.7" y="8.0" width="1.2" height="1.2" fill="#ff2000"/><path d="M2 13.5H14" stroke="#f8f000" stroke-width="2"/><circle cx="2" cy="13.5" r="1.8" fill="#fff" stroke="#000" stroke-width="1"/><circle cx="14" cy="13.5" r="1.8" fill="#fff" stroke="#000" stroke-width="1"/></svg></div>
<div class="btn1" style="left:587px;top:83px;width:22px;height:21px;"><svg style="left:2px;top:1px" width="16" height="16" viewBox="0 0 16 16"><path d="M7 1.5V9.5L2.5 5.5Z" fill="#008000"/><path d="M9 1.5V9.5L13.5 5.5Z" fill="#900000"/><path d="M2 13.5H14" stroke="#f8f000" stroke-width="2"/><circle cx="2" cy="13.5" r="1.8" fill="#fff" stroke="#000" stroke-width="1"/><circle cx="14" cy="13.5" r="1.8" fill="#fff" stroke="#000" stroke-width="1"/></svg></div>
<div class="btn1" style="left:609px;top:83px;width:22px;height:21px;"><svg style="left:2px;top:1px" width="16" height="16" viewBox="0 0 16 16"><text x="8" y="6.8" text-anchor="middle" font-family="Liberation Sans, sans-serif" font-size="10" fill="#000090" stroke="#000090" stroke-width="0.3">Hz</text><path d="M4 8.5V15.5L12 12Z" fill="#00a000" stroke="#204020" stroke-width="0.6"/></svg></div>
<div class="btn1" style="left:631px;top:83px;width:22px;height:21px;"><svg style="left:2px;top:1px" width="16" height="16" viewBox="0 0 16 16"><text x="8" y="8.5" text-anchor="middle" font-family="Liberation Sans, sans-serif" font-size="10.5" fill="#008000" stroke="#008000" stroke-width="0.3">Hz</text><path d="M1.5 12.5H14.5" stroke="#000090" stroke-width="1"/><circle cx="1.8" cy="12.5" r="1.1" fill="#fff" stroke="#000" stroke-width="0.7"/><circle cx="14.2" cy="12.5" r="1.1" fill="#fff" stroke="#000" stroke-width="0.7"/><circle cx="6" cy="12.5" r="1.2" fill="#00d000"/><circle cx="10.5" cy="12.5" r="1.2" fill="#00d000"/></svg></div>
<div class="btn1" style="left:653px;top:83px;width:22px;height:21px;"><svg style="left:2px;top:1px" width="16" height="16" viewBox="0 0 16 16"><path d="M2.5 5.5V3.5Q2.5 2 4.5 2H10.5M13.5 10.5V12.5Q13.5 14 11.5 14H5.5" stroke="#000090" stroke-width="1.8" fill="none"/><path d="M10 0L13.5 2.2L10 4.5ZM6 16L2.5 13.8L6 11.5Z" fill="#000090"/><path d="M4 11.5L12 4.5" stroke="#000" stroke-width="1"/><path d="M3 7.5H7M5 5.5V9.5M9.5 9.5H13" stroke="#000090" stroke-width="1.3"/><path d="M0.5 2.5L3.5 0.5V4.5Z" fill="#008000"/><path d="M15.5 13.5L12.5 11.5V15.5Z" fill="#900000"/></svg></div>
<div class="btn1" style="left:675px;top:83px;width:22px;height:21px;"><svg style="left:2px;top:1px" width="16" height="16" viewBox="0 0 16 16"><circle cx="6" cy="5" r="3.0" fill="#c8c8c8" stroke="#000" stroke-width="1.1"/><path d="M6 5L4.2 3.2" stroke="#707070" stroke-width="1.1"/><rect x="2.1" y="7.7" width="1.2" height="1.2" fill="#00d000"/><rect x="0.8" y="5.3" width="1.2" height="1.2" fill="#00d000"/><rect x="1.1" y="2.6" width="1.2" height="1.2" fill="#00d000"/><rect x="2.8" y="0.5" width="1.2" height="1.2" fill="#00d000"/><rect x="5.4" y="-0.3" width="1.2" height="1.2" fill="#e8e000"/><rect x="8.0" y="0.5" width="1.2" height="1.2" fill="#e8e000"/><rect x="9.7" y="2.6" width="1.2" height="1.2" fill="#ff2000"/><rect x="10.0" y="5.3" width="1.2" height="1.2" fill="#ff2000"/><rect x="8.7" y="7.7" width="1.2" height="1.2" fill="#ff2000"/><rect x="12.5" y="0.5" width="1.8" height="6" fill="#000090"/><rect x="12.5" y="7.5" width="1.8" height="1.8" fill="#000090"/><rect x="3" y="11" width="9" height="1.8" fill="#008000"/><rect x="3" y="13.8" width="9" height="1.8" fill="#e01010"/></svg></div>
<div class="btn1" style="left:697px;top:83px;width:22px;height:21px;"><svg style="left:2px;top:1px" width="16" height="16" viewBox="0 0 16 16"><path d="M1 3.5Q4 0.5 6.5 1.5L8 2.2L9.5 1.5Q12 0.5 15 3.5Q12 8.5 8 8.5Q4 8.5 1 3.5Z" fill="#f01010"/><path d="M3.5 4Q8 6 12.5 4Q8 3 3.5 4Z" fill="#fff"/><path d="M5.5 10L10.5 15M10.5 10L5.5 15" stroke="#a00000" stroke-width="1.6"/><path d="M3 9L1.5 11.5M13 9L14.5 11.5M4 12L3 14.5M12 12L13 14.5" stroke="#000" stroke-width="0.9"/></svg></div>
<div class="btn1" style="left:719px;top:83px;width:22px;height:21px;"><svg style="left:2px;top:1px" width="16" height="16" viewBox="0 0 16 16"><circle cx="8" cy="8" r="6.8" fill="#000090" stroke="#f0e000" stroke-width="1.8"/><path d="M8.5 3V8.5L6 10.5" stroke="#f0e000" stroke-width="1.6" fill="none"/><path d="M8 2.5v1M8 12.5v1M2.5 8h1M12.5 8h1M4.2 4.2l.6 .6M11.2 11.2l.6 .6M4.2 11.8l.6-.6M11.2 4.8l.6-.6" stroke="#fff" stroke-width="0.8"/></svg></div>
<div style="left:743px;top:82px;width:1px;height:23px;background:#808080"></div>
<div style="left:744px;top:82px;width:1px;height:23px;background:#fff"></div>
<div style="left:767px;top:82px;width:114px;height:22px;border:1px solid;border-color:#fff #808080 #808080 #fff;"></div>
<div style="left:770px;top:84px;width:3px;height:18px;border:1px solid;border-color:#fff #808080 #808080 #fff;"></div>
<div style="left:778px;top:83px;width:102px;height:19px;background:#000;border:1px solid;border-color:#808080 #fff #fff #808080;"></div>
<div class="t sans" style="left:785.5px;top:85px;color:#00e400;font-size:13.5px;line-height:15px;font-weight:bold;letter-spacing:0.25px;">00:02:06.9</div>
<div style="left:862px;top:85px;width:7px;height:7px;background:#008000"></div>
<div style="left:862px;top:94px;width:7px;height:7px;background:#800000;border-radius:50%"></div>
<div style="left:4px;top:105px;width:878px;height:1px;background:#808080"></div>
<div style="left:4px;top:106px;width:878px;height:1px;background:#fff"></div>
<div style="left:7px;top:110px;width:3px;height:19px;border:1px solid;border-color:#fff #808080 #808080 #fff;"></div>
<div class="btn1" style="left:15px;top:110px;width:30px;height:18px;"><div style="left:-1px;top:-1px;width:30px;height:18px"><svg style="left:0px;top:0px" width="30" height="18" viewBox="0 0 30 18"><path d="M9.5 3L21 9L9.5 15Z" fill="#00e000"/><path d="M9.5 15L21 9" stroke="#fff" stroke-width="1.2" fill="none"/><path d="M9.5 15V3L21 9" stroke="#707070" stroke-width="0.9" fill="none"/></svg></div></div>
<div class="btn1" style="left:45px;top:110px;width:30px;height:18px;"><div style="left:-1px;top:-1px;width:30px;height:18px"><svg style="left:0px;top:0px" width="30" height="18" viewBox="0 0 30 18"><path d="M9.5 3L21 9L9.5 15Z" fill="#f0f000"/><path d="M9.5 15L21 9" stroke="#fff" stroke-width="1.2" fill="none"/><path d="M9.5 15V3L21 9" stroke="#707070" stroke-width="0.9" fill="none"/></svg></div></div>
<div style="left:75px;top:110px;width:30px;height:18px;"><svg style="left:0px;top:0px" width="30" height="18" viewBox="0 0 30 18"><rect x="9.5" y="4" width="10" height="10" fill="#808080"/></svg></div>
<div class="btn1" style="left:113px;top:110px;width:30px;height:18px;"><div style="left:-1px;top:-1px;width:30px;height:18px"><svg style="left:0px;top:0px" width="30" height="18" viewBox="0 0 30 18"><path d="M13.5 3L3 9L13.5 15Z" fill="#0000e8"/><path d="M13.5 15L3 9" stroke="#fff" stroke-width="1.2" fill="none"/><path d="M13.5 15V3L3 9" stroke="#707070" stroke-width="0.9" fill="none"/><path d="M25 3L13.5 9L25 15Z" fill="#0000e8"/><path d="M25 15L13.5 9" stroke="#fff" stroke-width="1.2" fill="none"/><path d="M25 15V3L13.5 9" stroke="#707070" stroke-width="0.9" fill="none"/></svg></div></div>
<div class="btn1" style="left:143px;top:110px;width:30px;height:18px;"><div style="left:-1px;top:-1px;width:30px;height:18px"><svg style="left:0px;top:0px" width="30" height="18" viewBox="0 0 30 18"><path d="M3.5 3L14 9L3.5 15Z" fill="#0000e8"/><path d="M3.5 15L14 9" stroke="#fff" stroke-width="1.2" fill="none"/><path d="M3.5 15V3L14 9" stroke="#707070" stroke-width="0.9" fill="none"/><path d="M14 3L25 9L14 15Z" fill="#0000e8"/><path d="M14 15L25 9" stroke="#fff" stroke-width="1.2" fill="none"/><path d="M14 15V3L25 9" stroke="#707070" stroke-width="0.9" fill="none"/></svg></div></div>
<div style="left:173px;top:110px;width:30px;height:18px;"><svg style="left:0px;top:0px" width="30" height="18" viewBox="0 0 30 18"><rect x="8.5" y="4" width="4" height="10" fill="#8c8c8c"/><rect x="15" y="4" width="4.3" height="10" fill="#8c8c8c"/></svg></div>
<div class="btn1" style="left:209px;top:110px;width:30px;height:18px;"><div style="left:-1px;top:-1px;width:30px;height:18px"><svg style="left:0px;top:0px" width="30" height="18" viewBox="0 0 30 18"><rect x="8.7" y="5.2" width="4.2" height="10" fill="#fff"/><rect x="15.5" y="5.2" width="4.2" height="10" fill="#fff"/><rect x="9.5" y="4.5" width="4.2" height="9.7" fill="#f00000"/><rect x="16.3" y="4.5" width="4.2" height="9.7" fill="#f00000"/></svg></div></div>
<div class="btn1" style="left:239px;top:110px;width:30px;height:18px;"><div style="left:-1px;top:-1px;width:30px;height:18px"><svg style="left:0px;top:0px" width="30" height="18" viewBox="0 0 30 18"><rect x="8.4" y="5.2" width="10.3" height="10" fill="#fff"/><rect x="9.2" y="4.5" width="10.3" height="9.7" fill="#f00000"/></svg></div></div>
<div class="btn1" style="left:275px;top:110px;width:30px;height:18px;"><div style="left:-1px;top:-1px;width:30px;height:18px"><svg style="left:0px;top:0px" width="30" height="18" viewBox="0 0 30 18"><circle cx="10" cy="9" r="4.6" fill="#fff" stroke="#104888" stroke-width="1.1"/><circle cx="10" cy="9" r="1.7" fill="#00c000"/><rect x="17.5" y="4.5" width="8.5" height="9" fill="#fff" stroke="#104888" stroke-width="1.1"/><path d="M19.3 9L21.3 11.3L24.5 6.2" stroke="#00a000" stroke-width="1.7" fill="none"/></svg></div></div>
<div class="btn1" style="left:305px;top:110px;width:30px;height:18px;"><div style="left:-1px;top:-1px;width:30px;height:18px"><svg style="left:0px;top:0px" width="30" height="18" viewBox="0 0 30 18"><rect x="12.5" y="6" width="9.5" height="7.5" fill="#fff"/><rect x="12" y="5" width="9.5" height="7.5" fill="#c0c0c0" stroke="#000" stroke-width="1.2"/><rect x="12" y="5" width="9.5" height="2.5" fill="#000"/></svg></div></div>
<div style="left:336px;top:107px;width:1px;height:23px;background:#808080"></div>
<div style="left:337px;top:107px;width:1px;height:23px;background:#fff"></div>
<div style="left:341px;top:109px;width:3px;height:19px;border:1px solid;border-color:#fff #808080 #808080 #fff;"></div>
<div style="left:349px;top:108px;width:530px;height:21px;border:1px solid;border-color:#808080 #fff #fff #808080;background:#c0c0c0"></div>
<div class="t sans" style="left:352px;top:110px;font-size:8.5px;line-height:8px;font-weight:bold;">L</div>
<div class="t sans" style="left:352px;top:120px;font-size:8.5px;line-height:8px;font-weight:bold;">R</div>
<div style="left:360px;top:109px;width:509px;height:19px;background:linear-gradient(90deg,#005800 0,#186800 25%,#507000 45%,#787800 62%,#804800 80%,#800000 100%)"></div>
<div style="left:360px;top:109px;width:262px;height:10px;background:linear-gradient(90deg,#00b000 0,#30d000 25%,#a0e000 45%,#f0f000 62%,#ff9000 80%,#ff0000 100%);background-size:509px 100%;"></div>
<div style="left:360px;top:119px;width:357px;height:9px;background:linear-gradient(90deg,#00b000 0,#30d000 25%,#a0e000 45%,#f0f000 62%,#ff9000 80%,#ff0000 100%);background-size:509px 100%;"></div>
<div style="left:759px;top:109px;width:2px;height:9px;background:#ff9020"></div>
<div style="left:869px;top:109px;width:10px;height:19px;background:#c0c0c0"></div>
<div style="left:871px;top:110px;width:7px;height:7px;background:#000;border:1px solid #fff"></div>
<div style="left:871px;top:120px;width:7px;height:7px;background:#ff0000;border:1px solid #e8e8e8"></div>
<div style="left:867px;top:119px;width:2px;height:9px;background:#ff0000"></div>
<div style="left:4px;top:132px;width:878px;height:425px;border:1px solid;border-color:#808080 #fff #fff #808080;background:#c0c0c0"></div>
<div style="left:5px;top:133px;width:876px;height:423px;border:1px solid;border-color:#000 #c0c0c0 #c0c0c0 #000;"></div>
<div style="left:6px;top:134px;width:874px;height:421px;border:1px solid;border-color:#c0c0c0 #000 #000 #c0c0c0;"></div>
<div style="left:7px;top:135px;width:872px;height:419px;border:1px solid;border-color:#fff #808080 #808080 #fff;"></div>
<div style="left:10px;top:138px;width:866px;height:18px;background:linear-gradient(90deg,#000080,#1084d0);"></div>
<svg style="left:12px;top:140px" width="16" height="14" viewBox="0 0 16 14"><path d="M1 3 L3.8 3 L4.6 5 L5.4 3 L9.8 3 L10.8 5 L11.8 3 L15 3 L11.6 12 L9.6 12 L7.7 7 L5.6 12 L3.6 12 Z" fill="#ffff00"/></svg>
<div class="t" style="left:30px;top:140px;color:#fff;font-size:11.5px;line-height:14px;font-weight:500;font-family:'Liberation Sans','Noto Sans CJK TC',sans-serif;">未命名2</div>
<div class="cap" style="left:824px;top:140px;width:16px;height:14px;"><div style="left:3px;top:8px;width:6px;height:2px;background:#000"></div></div><div class="cap" style="left:840px;top:140px;width:16px;height:14px;"><div style="left:2px;top:1px;width:9px;height:9px;border:1px solid #000;border-top-width:2px"></div></div><div class="cap" style="left:858px;top:140px;width:16px;height:14px;"><svg style="left:3px;top:2px" width="8" height="7" viewBox="0 0 8 7"><path d="M0 0h2l2 2 2-2h2l-3 3.5 3 3.5h-2l-2-2-2 2h-2l3-3.5z" fill="#000"/></svg></div>
<div style="left:24px;top:157px;width:833px;height:3px;background:#808080"></div>
<div style="left:24px;top:157px;width:2px;height:316px;background:#808080"></div>
<div style="left:26px;top:160px;width:1px;height:313px;background:#00ffff"></div>
<div style="left:855px;top:160px;width:1px;height:313px;background:#00ffff"></div>
<div style="left:856px;top:160px;width:1px;height:323px;background:#fff"></div>
<div style="left:856px;top:483px;width:2px;height:19px;background:#fff"></div>
<div style="left:856px;top:505px;width:2px;height:46px;background:#fff"></div>
<svg style="left:27px;top:160px" width="828" height="313" viewBox="27 160 828 313" shape-rendering="crispEdges"><rect x="27" y="160" width="828" height="313" fill="#000080"/><path d="M54.5 160V473M81.5 160V473M109.5 160V473M137.5 160V473M164.5 160V473M192.5 160V473M219.5 160V473M247.5 160V473M275.5 160V473M302.5 160V473M330.5 160V473M358.5 160V473M385.5 160V473M413.5 160V473M441.5 160V473M468.5 160V473M496.5 160V473M523.5 160V473M551.5 160V473M579.5 160V473M606.5 160V473M634.5 160V473M662.5 160V473M689.5 160V473M717.5 160V473M745.5 160V473M772.5 160V473M800.5 160V473M827.5 160V473M27 198.5H855M27 275.5H855M27 356.5H855M27 433.5H855" stroke="#808080" stroke-width="1" fill="none"/><rect x="27" y="314" width="828" height="4" fill="#808080"/><path d="M27 160.5h5M27 168.5h1M27 175.5h1M27 183.5h1M27 191.5h1M27 198.5h5M27 206.5h1M27 214.5h1M27 222.5h1M27 229.5h1M27 237.5h5M27 245.5h1M27 252.5h1M27 260.5h1M27 268.5h1M27 276.5h5M27 283.5h1M27 291.5h1M27 299.5h1M27 306.5h1M27 314.5h5M27 318.5h5M27 326.5h1M27 333.5h1M27 341.5h1M27 349.5h1M27 356.5h5M27 364.5h1M27 372.5h1M27 380.5h1M27 387.5h1M27 395.5h5M27 403.5h1M27 410.5h1M27 418.5h1M27 426.5h1M27 434.5h5M27 441.5h1M27 449.5h1M27 457.5h1M27 464.5h1M27 472.5h5" stroke="#e0e0e0" stroke-width="1" fill="none"/><path d="M27.5 223V252M28.5 222V257M29.5 221V252M30.5 219V258M31.5 222V251M32.5 212V259M33.5 222V257M34.5 217V251M35.5 219V256M36.5 216V260M37.5 222V249M38.5 215V247M39.5 207V265M40.5 226V250M41.5 226V252M42.5 223V244M43.5 224V248M44.5 229V248M45.5 230V247M46.5 227V250M47.5 228V244M48.5 228V247M49.5 228V245M50.5 225V246M51.5 228V249M52.5 229V246M53.5 232V246M54.5 226V246M55.5 227V245M56.5 231V241M57.5 231V245M58.5 232V246M59.5 223V248M60.5 224V250M61.5 226V253M62.5 222V255M63.5 219V256M64.5 208V264M65.5 218V256M66.5 219V251M67.5 219V258M68.5 220V251M69.5 220V254M70.5 224V254M71.5 223V253M72.5 223V253M73.5 214V260M74.5 236V238M75.5 236V238M76.5 236V238M77.5 236V238M78.5 236V238M79.5 236V238M80.5 236V238M81.5 236V238M82.5 236V238M83.5 236V238M84.5 236V238M85.5 233V240M86.5 224V256M87.5 219V256M88.5 216V260M89.5 215V257M90.5 217V254M91.5 207V275M92.5 204V270M93.5 206V265M94.5 210V289M95.5 206V265M96.5 206V280M97.5 191V289M98.5 211V274M99.5 202V270M100.5 194V272M101.5 204V269M102.5 210V273M103.5 196V277M104.5 203V266M105.5 193V284M106.5 204V268M107.5 217V258M108.5 191V276M109.5 208V276M110.5 209V270M111.5 203V268M112.5 200V268M113.5 207V271M114.5 198V283M115.5 209V266M116.5 206V260M117.5 208V263M118.5 206V265M119.5 198V270M120.5 216V256M121.5 222V262M122.5 213V258M123.5 215V251M124.5 212V256M125.5 221V261M126.5 223V255M127.5 215V260M128.5 221V251M129.5 223V250M130.5 224V249M131.5 229V248M132.5 231V246M133.5 224V248M134.5 227V249M135.5 227V251M136.5 221V250M137.5 222V249M138.5 220V253M139.5 221V256M140.5 213V255M141.5 221V254M142.5 223V252M143.5 226V259M144.5 215V256M145.5 222V253M146.5 222V254M147.5 212V265M148.5 223V257M149.5 220V258M150.5 221V254M151.5 223V255M152.5 218V253M153.5 225V254M154.5 225V245M155.5 231V245M156.5 233V243M157.5 234V240M158.5 234V239M159.5 233V240M160.5 234V239M161.5 234V239M162.5 230V245M163.5 223V252M164.5 222V251M165.5 221V252M166.5 217V252M167.5 226V247M168.5 220V249M169.5 216V250M170.5 220V252M171.5 226V255M172.5 223V252M173.5 226V261M174.5 220V250M175.5 227V251M176.5 221V253M177.5 212V261M178.5 223V249M179.5 226V261M180.5 220V250M181.5 222V254M182.5 224V251M183.5 226V248M184.5 220V256M185.5 214V260M186.5 218V257M187.5 215V256M188.5 217V250M189.5 224V253M190.5 223V250M191.5 227V250M192.5 197V275M193.5 224V249M194.5 230V250M195.5 231V245M196.5 229V242M197.5 229V244M198.5 230V245M199.5 230V244M200.5 231V244M201.5 228V243M202.5 233V241M203.5 232V243M204.5 233V240M205.5 234V238M206.5 235V238M207.5 235V238M208.5 235V238M209.5 235V239M210.5 235V239M211.5 235V238M212.5 234V240M213.5 233V241M214.5 233V241M215.5 232V244M216.5 232V240M217.5 230V245M218.5 228V242M219.5 231V243M220.5 230V244M221.5 230V246M222.5 229V244M223.5 226V243M224.5 222V250M225.5 227V245M226.5 226V244M227.5 229V244M228.5 227V244M229.5 230V245M230.5 228V243M231.5 229V247M232.5 231V247M233.5 228V246M234.5 229V244M235.5 229V246M236.5 229V248M237.5 229V247M238.5 229V246M239.5 224V246M240.5 230V244M241.5 229V244M242.5 222V249M243.5 229V245M244.5 228V244M245.5 227V246M246.5 228V247M247.5 226V245M248.5 227V257M249.5 218V257M250.5 208V261M251.5 208V279M252.5 195V261M253.5 204V276M254.5 198V289M255.5 215V282M256.5 202V270M257.5 189V279M258.5 211V266M259.5 209V264M260.5 203V268M261.5 204V266M262.5 208V266M263.5 207V269M264.5 205V263M265.5 210V282M266.5 203V280M267.5 178V279M268.5 193V275M269.5 211V259M270.5 210V268M271.5 211V284M272.5 199V262M273.5 197V285M274.5 182V281M275.5 207V266M276.5 194V267M277.5 209V268M278.5 201V269M279.5 191V284M280.5 198V289M281.5 210V260M282.5 204V264M283.5 219V258M284.5 217V256M285.5 221V264M286.5 223V255M287.5 214V249M288.5 223V251M289.5 229V251M290.5 226V247M291.5 228V246M292.5 226V249M293.5 227V245M294.5 227V248M295.5 222V245M296.5 226V247M297.5 230V246M298.5 229V244M299.5 226V246M300.5 220V247M301.5 222V249M302.5 220V252M303.5 220V252M304.5 215V252M305.5 219V254M306.5 208V261M307.5 213V258M308.5 215V253M309.5 213V260M310.5 212V262M311.5 205V284M312.5 199V266M313.5 200V264M314.5 187V262M315.5 179V261M316.5 192V269M317.5 201V277M318.5 181V287M319.5 187V297M320.5 195V274M321.5 187V269M322.5 196V275M323.5 206V275M324.5 201V265M325.5 214V259M326.5 220V254M327.5 201V266M328.5 212V270M329.5 195V289M330.5 177V292M331.5 169V284M332.5 160V308M333.5 188V280M334.5 186V275M335.5 174V293M336.5 185V291M337.5 195V281M338.5 185V291M339.5 163V300M340.5 196V277M341.5 183V285M342.5 179V297M343.5 168V292M344.5 188V289M345.5 165V284M346.5 216V278M347.5 209V292M348.5 212V271M349.5 215V262M350.5 215V268M351.5 210V262M352.5 205V268M353.5 202V272M354.5 193V271M355.5 207V260M356.5 214V269M357.5 196V271M358.5 190V284M359.5 189V283M360.5 188V283M361.5 181V300M362.5 185V292M363.5 204V281M364.5 188V269M365.5 192V272M366.5 208V276M367.5 212V268M368.5 213V280M369.5 209V272M370.5 211V262M371.5 208V277M372.5 209V300M373.5 197V291M374.5 186V285M375.5 198V286" stroke="#00ff00" stroke-width="1" fill="none"/><path d="M27.5 377V415M28.5 369V407M29.5 374V407M30.5 375V410M31.5 374V410M32.5 366V417M33.5 377V409M34.5 371V411M35.5 379V409M36.5 371V405M37.5 382V410M38.5 378V404M39.5 360V422M40.5 381V401M41.5 383V403M42.5 386V403M43.5 383V403M44.5 386V406M45.5 384V403M46.5 383V407M47.5 380V404M48.5 384V404M49.5 385V403M50.5 385V403M51.5 380V402M52.5 388V401M53.5 383V403M54.5 385V402M55.5 384V399M56.5 387V400M57.5 388V401M58.5 388V401M59.5 380V408M60.5 369V407M61.5 373V412M62.5 365V413M63.5 373V410M64.5 361V421M65.5 374V417M66.5 376V409M67.5 372V412M68.5 379V407M69.5 380V413M70.5 376V411M71.5 372V410M72.5 371V406M73.5 369V418M74.5 394V396M75.5 394V396M76.5 394V396M77.5 394V396M78.5 394V396M79.5 394V396M80.5 394V396M81.5 394V396M82.5 394V396M83.5 394V396M84.5 394V396M85.5 387V399M86.5 373V403M87.5 373V409M88.5 370V418M89.5 370V415M90.5 362V417M91.5 354V419M92.5 347V431M93.5 344V431M94.5 351V426M95.5 349V439M96.5 360V430M97.5 342V446M98.5 355V431M99.5 359V427M100.5 361V425M101.5 351V430M102.5 365V436M103.5 347V434M104.5 350V445M105.5 359V426M106.5 353V420M107.5 333V431M108.5 331V433M109.5 354V430M110.5 368V423M111.5 354V427M112.5 331V428M113.5 352V424M114.5 344V439M115.5 334V428M116.5 350V434M117.5 362V421M118.5 356V420M119.5 362V418M120.5 354V420M121.5 369V418M122.5 369V410M123.5 371V413M124.5 371V421M125.5 373V412M126.5 370V413M127.5 377V406M128.5 376V409M129.5 377V409M130.5 379V406M131.5 384V401M132.5 381V401M133.5 380V406M134.5 373V414M135.5 380V407M136.5 366V408M137.5 377V415M138.5 370V409M139.5 380V418M140.5 368V408M141.5 375V410M142.5 374V419M143.5 373V412M144.5 373V416M145.5 362V409M146.5 380V412M147.5 366V422M148.5 373V416M149.5 369V408M150.5 372V410M151.5 372V411M152.5 370V410M153.5 380V406M154.5 383V407M155.5 386V401M156.5 386V399M157.5 391V399M158.5 391V397M159.5 391V398M160.5 389V398M161.5 391V397M162.5 385V403M163.5 376V407M164.5 375V406M165.5 378V407M166.5 367V408M167.5 372V411M168.5 373V417M169.5 381V407M170.5 378V418M171.5 377V407M172.5 378V412M173.5 371V409M174.5 373V407M175.5 370V411M176.5 382V410M177.5 366V416M178.5 370V408M179.5 379V411M180.5 375V410M181.5 376V408M182.5 374V411M183.5 379V410M184.5 369V409M185.5 369V416M186.5 376V405M187.5 367V410M188.5 379V410M189.5 371V407M190.5 365V410M191.5 373V408M192.5 349V431M193.5 377V408M194.5 380V401M195.5 386V401M196.5 382V403M197.5 385V403M198.5 379V403M199.5 381V401M200.5 385V403M201.5 386V401M202.5 384V401M203.5 390V400M204.5 390V400M205.5 391V398M206.5 391V396M207.5 391V397M208.5 391V396M209.5 392V396M210.5 392V396M211.5 391V396M212.5 392V398M213.5 390V399M214.5 391V399M215.5 389V399M216.5 389V399M217.5 385V400M218.5 389V400M219.5 386V402M220.5 385V404M221.5 383V401M222.5 382V406M223.5 385V401M224.5 378V408M225.5 383V402M226.5 385V401M227.5 387V402M228.5 381V404M229.5 384V406M230.5 382V403M231.5 382V403M232.5 386V403M233.5 383V401M234.5 386V402M235.5 384V402M236.5 385V403M237.5 384V406M238.5 386V403M239.5 387V402M240.5 381V402M241.5 383V403M242.5 378V406M243.5 386V402M244.5 382V402M245.5 378V402M246.5 383V402M247.5 382V403M248.5 377V405M249.5 375V410M250.5 359V418M251.5 370V422M252.5 360V421M253.5 355V432M254.5 350V445M255.5 351V424M256.5 365V419M257.5 340V435M258.5 349V417M259.5 358V423M260.5 333V434M261.5 349V438M262.5 354V429M263.5 349V436M264.5 367V435M265.5 352V418M266.5 334V428M267.5 327V435M268.5 358V422M269.5 356V420M270.5 354V429M271.5 352V436M272.5 350V435M273.5 355V428M274.5 332V438M275.5 356V440M276.5 369V422M277.5 341V419M278.5 358V425M279.5 343V440M280.5 350V446M281.5 356V436M282.5 370V419M283.5 363V412M284.5 370V420M285.5 371V416M286.5 380V412M287.5 377V410M288.5 370V412M289.5 380V405M290.5 382V404M291.5 374V405M292.5 381V404M293.5 374V405M294.5 383V403M295.5 380V405M296.5 383V403M297.5 385V408M298.5 382V405M299.5 379V403M300.5 385V404M301.5 379V415M302.5 373V410M303.5 358V413M304.5 372V411M305.5 372V412M306.5 361V417M307.5 358V413M308.5 364V417M309.5 366V413M310.5 361V414M311.5 362V423M312.5 332V420M313.5 358V423M314.5 342V430M315.5 336V428M316.5 340V433M317.5 339V444M318.5 330V443M319.5 338V453M320.5 350V424M321.5 361V445M322.5 351V418M323.5 327V428M324.5 355V436M325.5 350V427M326.5 358V414M327.5 361V417M328.5 349V424M329.5 342V446M330.5 326V448M331.5 326V437M332.5 320V464M333.5 343V435M334.5 336V446M335.5 323V452M336.5 328V444M337.5 345V458M338.5 331V461M339.5 320V456M340.5 328V446M341.5 337V452M342.5 329V453M343.5 325V437M344.5 338V440M345.5 339V460M346.5 356V429M347.5 363V448M348.5 366V428M349.5 351V416M350.5 365V419M351.5 355V422M352.5 363V423M353.5 369V432M354.5 344V428M355.5 366V425M356.5 358V424M357.5 341V435M358.5 337V433M359.5 338V427M360.5 321V433M361.5 320V456M362.5 335V448M363.5 347V434M364.5 340V455M365.5 346V436M366.5 359V437M367.5 374V421M368.5 361V415M369.5 373V421M370.5 367V423M371.5 353V426M372.5 348V437M373.5 351V438M374.5 323V454M375.5 338V438" stroke="#ff0000" stroke-width="1" fill="none"/><path d="M376 236.5H855" stroke="#00ff00" stroke-width="1" fill="none"/><path d="M376 394.5H855" stroke="#ff0000" stroke-width="1" fill="none"/><path d="M27 236.5H855" stroke="#d8d0d8" stroke-width="1" stroke-dasharray="4 3" fill="none"/><path d="M27 394.5H855" stroke="#d8d0d8" stroke-width="1" stroke-dasharray="4 3" fill="none"/><rect x="375.5" y="160" width="1.7" height="313" fill="#ffff00" shape-rendering="auto"/><text x="33.5" y="170.7" font-family="Liberation Sans, sans-serif" font-size="10" fill="#e0e0e0">1.0</text><text x="33.5" y="209.2" font-family="Liberation Sans, sans-serif" font-size="10" fill="#e0e0e0">0.5</text><text x="33.5" y="247.7" font-family="Liberation Sans, sans-serif" font-size="10" fill="#e0e0e0">0.0</text><text x="33" y="286.2" font-family="Liberation Sans, sans-serif" font-size="10" fill="#e0e0e0">-0.5</text><text x="33.5" y="328.7" font-family="Liberation Sans, sans-serif" font-size="10" fill="#e0e0e0">1.0</text><text x="33.5" y="367.2" font-family="Liberation Sans, sans-serif" font-size="10" fill="#e0e0e0">0.5</text><text x="33.5" y="405.7" font-family="Liberation Sans, sans-serif" font-size="10" fill="#e0e0e0">0.0</text><text x="33" y="444.2" font-family="Liberation Sans, sans-serif" font-size="10" fill="#e0e0e0">-0.5</text></svg>
<div style="left:13px;top:420px;width:12px;height:1px;background:#fff"></div>
<div style="left:26px;top:473px;width:830px;height:1px;background:#fff"></div>
<div style="left:26px;top:474px;width:830px;height:1px;background:#c0c0c0"></div>
<svg style="left:27px;top:475px" width="828" height="8" viewBox="27 475 828 8" shape-rendering="crispEdges"><rect x="27" y="475" width="828" height="8" fill="#000"/><path d="M54.5 475V483M81.5 475V483M109.5 475V483M137.5 475V483M164.5 475V483M192.5 475V483M219.5 475V483M247.5 475V483M275.5 475V483M302.5 475V483M330.5 475V483M358.5 475V483M385.5 475V483M413.5 475V483M441.5 475V483M468.5 475V483M496.5 475V483M523.5 475V483M551.5 475V483M579.5 475V483M606.5 475V483M634.5 475V483M662.5 475V483M689.5 475V483M717.5 475V483M745.5 475V483M772.5 475V483M800.5 475V483M827.5 475V483" stroke="#a0a0a0" stroke-width="1" fill="none"/></svg>
<svg style="left:25px;top:483px" width="832" height="17" viewBox="25 483 832 17" shape-rendering="crispEdges"><rect x="25" y="483" width="832" height="17" fill="#c6c6c6"/><rect x="25" y="483" width="1" height="17" fill="#808080"/><path d="M26.5 483v7M32.5 484v2M37.5 484v2M43.5 484v2M48.5 484v2M54.5 483v5M59.5 484v2M65.5 484v2M70.5 484v2M76.5 484v2M81.5 483v7M87.5 484v2M92.5 484v2M98.5 484v2M103.5 484v2M109.5 483v5M114.5 484v2M120.5 484v2M126.5 484v2M131.5 484v2M137.5 483v7M142.5 484v2M148.5 484v2M153.5 484v2M159.5 484v2M164.5 483v5M170.5 484v2M175.5 484v2M181.5 484v2M186.5 484v2M192.5 483v7M197.5 484v2M203.5 484v2M208.5 484v2M214.5 484v2M219.5 483v5M225.5 484v2M231.5 484v2M236.5 484v2M242.5 484v2M247.5 483v7M253.5 484v2M258.5 484v2M264.5 484v2M269.5 484v2M275.5 483v5M280.5 484v2M286.5 484v2M291.5 484v2M297.5 484v2M302.5 483v7M308.5 484v2M313.5 484v2M319.5 484v2M324.5 484v2M330.5 483v5M336.5 484v2M341.5 484v2M347.5 484v2M352.5 484v2M358.5 483v7M363.5 484v2M369.5 484v2M374.5 484v2M380.5 484v2M385.5 483v5M391.5 484v2M396.5 484v2M402.5 484v2M407.5 484v2M413.5 483v7M418.5 484v2M424.5 484v2M429.5 484v2M435.5 484v2M441.5 483v5M446.5 484v2M452.5 484v2M457.5 484v2M463.5 484v2M468.5 483v7M474.5 484v2M479.5 484v2M485.5 484v2M490.5 484v2M496.5 483v5M501.5 484v2M507.5 484v2M512.5 484v2M518.5 484v2M523.5 483v7M529.5 484v2M534.5 484v2M540.5 484v2M546.5 484v2M551.5 483v5M557.5 484v2M562.5 484v2M568.5 484v2M573.5 484v2M579.5 483v7M584.5 484v2M590.5 484v2M595.5 484v2M601.5 484v2M606.5 483v5M612.5 484v2M617.5 484v2M623.5 484v2M628.5 484v2M634.5 483v7M640.5 484v2M645.5 484v2M651.5 484v2M656.5 484v2M662.5 483v5M667.5 484v2M673.5 484v2M678.5 484v2M684.5 484v2M689.5 483v7M695.5 484v2M700.5 484v2M706.5 484v2M711.5 484v2M717.5 483v5M722.5 484v2M728.5 484v2M733.5 484v2M739.5 484v2M745.5 483v7M750.5 484v2M756.5 484v2M761.5 484v2M767.5 484v2M772.5 483v5M778.5 484v2M783.5 484v2M789.5 484v2M794.5 484v2M800.5 483v7M805.5 484v2M811.5 484v2M816.5 484v2M822.5 484v2M827.5 483v5M833.5 484v2M838.5 484v2M844.5 484v2M850.5 484v2M855.5 483v7" stroke="#000" stroke-width="1" fill="none"/><text x="27.9" y="498" font-family="Liberation Sans, sans-serif" font-size="11" fill="#000" stroke="#000" stroke-width="0.25">00:00:00</text><text x="83.2" y="498" font-family="Liberation Sans, sans-serif" font-size="11" fill="#000" stroke="#000" stroke-width="0.25">00:00:20</text><text x="138.5" y="498" font-family="Liberation Sans, sans-serif" font-size="11" fill="#000" stroke="#000" stroke-width="0.25">00:00:40</text><text x="193.7" y="498" font-family="Liberation Sans, sans-serif" font-size="11" fill="#000" stroke="#000" stroke-width="0.25">00:01:00</text><text x="249.0" y="498" font-family="Liberation Sans, sans-serif" font-size="11" fill="#000" stroke="#000" stroke-width="0.25">00:01:20</text><text x="304.3" y="498" font-family="Liberation Sans, sans-serif" font-size="11" fill="#000" stroke="#000" stroke-width="0.25">00:01:40</text><text x="359.5" y="498" font-family="Liberation Sans, sans-serif" font-size="11" fill="#000" stroke="#000" stroke-width="0.25">00:02:00</text><text x="414.8" y="498" font-family="Liberation Sans, sans-serif" font-size="11" fill="#000" stroke="#000" stroke-width="0.25">00:02:20</text><text x="470.1" y="498" font-family="Liberation Sans, sans-serif" font-size="11" fill="#000" stroke="#000" stroke-width="0.25">00:02:40</text><text x="525.3" y="498" font-family="Liberation Sans, sans-serif" font-size="11" fill="#000" stroke="#000" stroke-width="0.25">00:03:00</text><text x="580.6" y="498" font-family="Liberation Sans, sans-serif" font-size="11" fill="#000" stroke="#000" stroke-width="0.25">00:03:20</text><text x="635.9" y="498" font-family="Liberation Sans, sans-serif" font-size="11" fill="#000" stroke="#000" stroke-width="0.25">00:03:40</text><text x="691.1" y="498" font-family="Liberation Sans, sans-serif" font-size="11" fill="#000" stroke="#000" stroke-width="0.25">00:04:00</text><text x="746.4" y="498" font-family="Liberation Sans, sans-serif" font-size="11" fill="#000" stroke="#000" stroke-width="0.25">00:04:20</text><text x="801.7" y="498" font-family="Liberation Sans, sans-serif" font-size="11" fill="#000" stroke="#000" stroke-width="0.25">00:04:40</text></svg>
<div style="left:25px;top:500px;width:832px;height:2px;background:#fff"></div>
<div style="left:24px;top:473px;width:1px;height:30px;background:#c0c0c0"></div>
<div style="left:24px;top:503px;width:833px;height:2px;background:#808080"></div>
<div style="left:24px;top:503px;width:2px;height:48px;background:#808080"></div>
<div style="left:26px;top:505px;width:1px;height:29px;background:#00ffff"></div>
<div style="left:27px;top:505px;width:828px;height:29px;background:#fff"></div>
<div style="left:855px;top:505px;width:1px;height:29px;background:#00ffff"></div>
<svg style="left:29px;top:507px" width="824" height="26" viewBox="29 507 824 26" shape-rendering="crispEdges"><rect x="29" y="507" width="824" height="26" fill="#000080"/><path d="M28 512.5H854" stroke="#00ff00" stroke-width="1"/><path d="M28 527.5H854" stroke="#ff0000" stroke-width="1"/><path d="M28.5 511V515M29.5 511V515M30.5 511V515M31.5 511V515M32.5 511V515M33.5 510V516M34.5 511V515M35.5 510V515M36.5 511V515M37.5 510V516M38.5 511V514M39.5 510V514M40.5 509V516M41.5 511V515M42.5 511V515M43.5 511V514M44.5 511V514M45.5 512V514M46.5 512V514M47.5 511V515M48.5 512V514M49.5 512V514M50.5 512V514M51.5 511V514M52.5 512V514M53.5 512V514M54.5 512V514M55.5 511V514M56.5 511V514M57.5 512V514M58.5 512V514M59.5 512V514M60.5 511V514M61.5 511V515M62.5 511V515M63.5 511V515M64.5 511V515M65.5 509V516M66.5 510V515M67.5 511V515M68.5 511V515M69.5 511V515M70.5 511V515M71.5 511V515M72.5 511V515M73.5 511V515M74.5 510V516M75.5 512V514M76.5 512V514M77.5 512V514M78.5 512V514M79.5 512V514M80.5 512V514M81.5 512V514M82.5 512V514M83.5 512V514M84.5 512V514M85.5 512V514M86.5 512V514M87.5 511V515M88.5 510V515M89.5 510V516M90.5 510V515M91.5 510V515M92.5 509V517M93.5 509V517M94.5 509V516M95.5 510V519M96.5 509V516M97.5 509V518M98.5 507V519M99.5 510V517M100.5 509V517M101.5 508V517M102.5 509V517M103.5 510V517M104.5 508V518M105.5 509V516M106.5 508V518M107.5 509V517M108.5 510V515M109.5 507V517M110.5 509V517M111.5 509V517M112.5 509V517M113.5 508V516M114.5 509V517M115.5 508V518M116.5 509V516M117.5 509V516M118.5 509V516M119.5 509V516M120.5 508V517M121.5 510V515M122.5 511V516M123.5 510V515M124.5 510V515M125.5 510V515M126.5 511V516M127.5 511V515M128.5 510V516M129.5 511V515M130.5 511V515M131.5 511V514M132.5 512V514M133.5 512V514M134.5 511V514M135.5 511V514M136.5 511V515M137.5 511V515M138.5 511V514M139.5 511V515M140.5 511V515M141.5 510V515M142.5 511V515M143.5 511V515M144.5 511V516M145.5 510V515M146.5 511V515M147.5 511V515M148.5 510V516M149.5 511V515M150.5 511V515M151.5 511V515M152.5 511V515M153.5 510V515M154.5 511V515M155.5 511V514M156.5 512V514M157.5 512V514M158.5 512V514M159.5 512V514M160.5 512V514M161.5 512V514M162.5 512V514M163.5 512V514M164.5 511V515M165.5 511V515M166.5 511V515M167.5 510V515M168.5 511V514M169.5 511V514M170.5 510V514M171.5 511V515M172.5 511V515M173.5 511V515M174.5 511V516M175.5 511V515M176.5 511V515M177.5 511V515M178.5 510V516M179.5 511V514M180.5 511V516M181.5 511V515M182.5 511V515M183.5 511V515M184.5 511V514M185.5 511V515M186.5 510V516M187.5 510V515M188.5 510V515M189.5 510V515M190.5 511V515M191.5 511V514M192.5 511V515M193.5 508V517M194.5 511V514M195.5 512V514M196.5 512V514M197.5 512V514M198.5 512V514M199.5 512V514M200.5 512V514M201.5 512V514M202.5 512V514M203.5 512V514M204.5 512V514M205.5 512V514M206.5 512V514M207.5 512V514M208.5 512V514M209.5 512V514M210.5 512V514M211.5 512V514M212.5 512V514M213.5 512V514M214.5 512V514M215.5 512V514M216.5 512V514M217.5 512V514M218.5 512V514M219.5 512V514M220.5 512V514M221.5 512V514M222.5 512V514M223.5 512V514M224.5 511V514M225.5 511V515M226.5 511V514M227.5 511V514M228.5 512V514M229.5 511V514M230.5 512V514M231.5 512V514M232.5 512V514M233.5 512V514M234.5 512V514M235.5 512V514M236.5 512V514M237.5 512V514M238.5 512V514M239.5 512V514M240.5 511V514M241.5 512V514M242.5 512V514M243.5 511V514M244.5 512V514M245.5 512V514M246.5 511V514M247.5 512V514M248.5 511V514M249.5 511V515M250.5 510V515M251.5 509V516M252.5 509V518M253.5 508V516M254.5 509V517M255.5 508V519M256.5 510V518M257.5 509V517M258.5 507V518M259.5 510V516M260.5 509V516M261.5 509V517M262.5 509V516M263.5 509V516M264.5 509V517M265.5 509V516M266.5 510V518M267.5 509V518M268.5 506V518M269.5 508V517M270.5 510V516M271.5 509V517M272.5 510V518M273.5 508V516M274.5 508V518M275.5 506V518M276.5 509V516M277.5 508V516M278.5 509V516M279.5 509V517M280.5 507V518M281.5 508V519M282.5 509V516M283.5 509V516M284.5 511V515M285.5 510V515M286.5 511V516M287.5 511V515M288.5 510V514M289.5 511V515M290.5 512V515M291.5 511V514M292.5 512V514M293.5 511V514M294.5 511V514M295.5 511V514M296.5 511V514M297.5 511V514M298.5 512V514M299.5 512V514M300.5 511V514M301.5 511V514M302.5 511V514M303.5 511V515M304.5 511V515M305.5 510V515M306.5 510V515M307.5 509V516M308.5 510V515M309.5 510V515M310.5 510V516M311.5 510V516M312.5 509V518M313.5 508V516M314.5 508V516M315.5 507V516M316.5 506V516M317.5 507V517M318.5 508V518M319.5 506V519M320.5 507V520M321.5 508V517M322.5 507V517M323.5 508V517M324.5 509V517M325.5 509V516M326.5 510V515M327.5 511V515M328.5 509V516M329.5 510V517M330.5 508V519M331.5 506V519M332.5 505V518M333.5 504V521M334.5 507V518M335.5 507V517M336.5 506V519M337.5 507V519M338.5 508V518M339.5 507V519M340.5 504V520M341.5 508V518M342.5 506V518M343.5 506V520M344.5 505V519M345.5 507V519M346.5 505V518M347.5 510V518M348.5 509V519M349.5 510V517M350.5 510V516M351.5 510V516M352.5 509V516M353.5 509V517M354.5 509V517M355.5 508V517M356.5 509V516M357.5 510V517M358.5 508V517M359.5 507V518M360.5 507V518M361.5 506V520M362.5 507V519M363.5 509V518M364.5 507V517M365.5 508V517M366.5 509V517M367.5 510V517M368.5 510V518M369.5 509V517M370.5 510V516M371.5 509V518M372.5 509V520M373.5 508V519M374.5 507V518M375.5 508V519" stroke="#00ff00" stroke-width="1" fill="none"/><path d="M28.5 526V530M29.5 525V529M30.5 525V529M31.5 525V530M32.5 525V530M33.5 524V530M34.5 526V530M35.5 525V530M36.5 526V530M37.5 525V529M38.5 526V530M39.5 526V529M40.5 524V531M41.5 526V529M42.5 526V529M43.5 527V529M44.5 526V529M45.5 527V529M46.5 526V529M47.5 526V529M48.5 526V529M49.5 526V529M50.5 526V529M51.5 526V529M52.5 526V529M53.5 527V529M54.5 526V529M55.5 526V529M56.5 526V529M57.5 527V529M58.5 527V529M59.5 527V529M60.5 526V529M61.5 525V529M62.5 525V530M63.5 524V530M64.5 525V530M65.5 524V531M66.5 525V531M67.5 525V530M68.5 525V530M69.5 526V529M70.5 526V530M71.5 525V530M72.5 525V530M73.5 525V529M74.5 525V531M75.5 527V528M76.5 527V528M77.5 527V528M78.5 527V528M79.5 527V528M80.5 527V528M81.5 527V528M82.5 527V528M83.5 527V528M84.5 527V528M85.5 527V528M86.5 527V528M87.5 525V529M88.5 525V530M89.5 525V531M90.5 525V530M91.5 524V531M92.5 523V531M93.5 522V532M94.5 522V532M95.5 523V531M96.5 522V533M97.5 524V532M98.5 522V534M99.5 523V532M100.5 524V532M101.5 524V531M102.5 523V532M103.5 524V533M104.5 522V532M105.5 522V534M106.5 524V532M107.5 523V531M108.5 521V532M109.5 520V532M110.5 523V532M111.5 525V531M112.5 523V532M113.5 520V532M114.5 523V531M115.5 522V533M116.5 521V532M117.5 522V532M118.5 524V531M119.5 523V531M120.5 524V531M121.5 523V531M122.5 525V531M123.5 525V530M124.5 525V530M125.5 525V531M126.5 525V530M127.5 525V530M128.5 526V529M129.5 525V530M130.5 526V530M131.5 526V529M132.5 526V529M133.5 526V529M134.5 526V529M135.5 525V530M136.5 526V529M137.5 524V530M138.5 526V530M139.5 525V530M140.5 526V531M141.5 525V530M142.5 525V530M143.5 525V531M144.5 525V530M145.5 525V530M146.5 524V530M147.5 526V530M148.5 524V531M149.5 525V530M150.5 525V530M151.5 525V530M152.5 525V530M153.5 525V530M154.5 526V529M155.5 526V529M156.5 527V529M157.5 527V528M158.5 527V529M159.5 527V528M160.5 527V528M161.5 527V528M162.5 527V528M163.5 526V529M164.5 525V529M165.5 525V529M166.5 526V529M167.5 524V530M168.5 525V530M169.5 525V531M170.5 526V529M171.5 526V531M172.5 526V529M173.5 526V530M174.5 525V530M175.5 525V529M176.5 525V530M177.5 526V530M178.5 524V530M179.5 525V530M180.5 526V530M181.5 525V530M182.5 525V529M183.5 525V530M184.5 526V530M185.5 525V530M186.5 525V530M187.5 525V529M188.5 524V530M189.5 526V530M190.5 525V529M191.5 524V530M192.5 525V530M193.5 522V532M194.5 526V529M195.5 526V529M196.5 527V529M197.5 526V529M198.5 526V529M199.5 526V529M200.5 526V529M201.5 526V529M202.5 527V529M203.5 526V529M204.5 527V529M205.5 527V529M206.5 527V528M207.5 527V528M208.5 527V528M209.5 527V528M210.5 527V528M211.5 527V528M212.5 527V528M213.5 527V528M214.5 527V528M215.5 527V528M216.5 527V528M217.5 527V528M218.5 526V529M219.5 527V529M220.5 526V529M221.5 526V529M222.5 526V529M223.5 526V529M224.5 526V529M225.5 526V530M226.5 526V529M227.5 526V529M228.5 527V529M229.5 526V529M230.5 526V529M231.5 526V529M232.5 526V529M233.5 527V529M234.5 526V529M235.5 527V529M236.5 526V529M237.5 526V529M238.5 526V529M239.5 527V529M240.5 527V529M241.5 526V529M242.5 526V529M243.5 526V529M244.5 527V529M245.5 526V529M246.5 526V529M247.5 526V529M248.5 526V529M249.5 526V529M250.5 525V530M251.5 524V531M252.5 525V531M253.5 524V531M254.5 523V532M255.5 523V534M256.5 523V531M257.5 524V531M258.5 521V533M259.5 522V531M260.5 523V531M261.5 521V532M262.5 522V533M263.5 523V532M264.5 522V533M265.5 524V533M266.5 523V531M267.5 521V532M268.5 520V533M269.5 523V531M270.5 523V531M271.5 523V532M272.5 523V533M273.5 523V533M274.5 523V532M275.5 520V533M276.5 523V533M277.5 525V531M278.5 521V531M279.5 523V531M280.5 522V533M281.5 523V534M282.5 523V533M283.5 525V531M284.5 524V530M285.5 525V531M286.5 525V530M287.5 526V530M288.5 525V530M289.5 525V530M290.5 526V529M291.5 526V529M292.5 525V529M293.5 526V529M294.5 525V529M295.5 526V529M296.5 526V529M297.5 526V529M298.5 526V529M299.5 526V529M300.5 526V529M301.5 526V529M302.5 526V530M303.5 525V530M304.5 523V530M305.5 525V530M306.5 525V530M307.5 524V531M308.5 523V530M309.5 524V531M310.5 524V530M311.5 524V530M312.5 524V531M313.5 521V531M314.5 523V531M315.5 522V532M316.5 521V532M317.5 521V532M318.5 521V534M319.5 520V533M320.5 521V535M321.5 523V531M322.5 524V534M323.5 523V531M324.5 520V532M325.5 523V533M326.5 523V532M327.5 523V530M328.5 524V530M329.5 522V531M330.5 522V534M331.5 520V534M332.5 520V533M333.5 519V536M334.5 522V533M335.5 521V534M336.5 519V534M337.5 520V534M338.5 522V535M339.5 520V535M340.5 519V535M341.5 520V534M342.5 521V534M343.5 520V535M344.5 520V533M345.5 521V533M346.5 521V535M347.5 523V532M348.5 524V534M349.5 524V532M350.5 523V530M351.5 524V531M352.5 523V531M353.5 524V531M354.5 525V532M355.5 522V532M356.5 524V531M357.5 523V531M358.5 522V533M359.5 521V532M360.5 519V532M361.5 519V535M362.5 521V534M363.5 522V532M364.5 521V535M365.5 522V533M366.5 524V533M367.5 525V531M368.5 524V530M369.5 525V531M370.5 524V531M371.5 523V532M372.5 522V533M373.5 523V533M374.5 520V535M375.5 521V533" stroke="#ff0000" stroke-width="1" fill="none"/><path d="M376.5 506V533" stroke="#ffff00" stroke-width="1"/><path d="M377.5 506V533" stroke="#fff" stroke-width="1"/></svg>
<svg style="left:25px;top:534px" width="832" height="15" viewBox="25 534 832 15" shape-rendering="crispEdges"><rect x="25" y="534" width="832" height="15" fill="#c6c6c6"/><rect x="25" y="534" width="1" height="15" fill="#808080"/><path d="M26.5 536v6M32.5 537v2M37.5 537v2M43.5 537v2M48.5 537v2M54.5 536v3M59.5 537v2M65.5 537v2M70.5 537v2M76.5 537v2M81.5 536v6M87.5 537v2M92.5 537v2M98.5 537v2M103.5 537v2M109.5 536v3M114.5 537v2M120.5 537v2M126.5 537v2M131.5 537v2M137.5 536v6M142.5 537v2M148.5 537v2M153.5 537v2M159.5 537v2M164.5 536v3M170.5 537v2M175.5 537v2M181.5 537v2M186.5 537v2M192.5 536v6M197.5 537v2M203.5 537v2M208.5 537v2M214.5 537v2M219.5 536v3M225.5 537v2M231.5 537v2M236.5 537v2M242.5 537v2M247.5 536v6M253.5 537v2M258.5 537v2M264.5 537v2M269.5 537v2M275.5 536v3M280.5 537v2M286.5 537v2M291.5 537v2M297.5 537v2M302.5 536v6M308.5 537v2M313.5 537v2M319.5 537v2M324.5 537v2M330.5 536v3M336.5 537v2M341.5 537v2M347.5 537v2M352.5 537v2M358.5 536v6M363.5 537v2M369.5 537v2M374.5 537v2M380.5 537v2M385.5 536v3M391.5 537v2M396.5 537v2M402.5 537v2M407.5 537v2M413.5 536v6M418.5 537v2M424.5 537v2M429.5 537v2M435.5 537v2M441.5 536v3M446.5 537v2M452.5 537v2M457.5 537v2M463.5 537v2M468.5 536v6M474.5 537v2M479.5 537v2M485.5 537v2M490.5 537v2M496.5 536v3M501.5 537v2M507.5 537v2M512.5 537v2M518.5 537v2M523.5 536v6M529.5 537v2M534.5 537v2M540.5 537v2M546.5 537v2M551.5 536v3M557.5 537v2M562.5 537v2M568.5 537v2M573.5 537v2M579.5 536v6M584.5 537v2M590.5 537v2M595.5 537v2M601.5 537v2M606.5 536v3M612.5 537v2M617.5 537v2M623.5 537v2M628.5 537v2M634.5 536v6M640.5 537v2M645.5 537v2M651.5 537v2M656.5 537v2M662.5 536v3M667.5 537v2M673.5 537v2M678.5 537v2M684.5 537v2M689.5 536v6M695.5 537v2M700.5 537v2M706.5 537v2M711.5 537v2M717.5 536v3M722.5 537v2M728.5 537v2M733.5 537v2M739.5 537v2M745.5 536v6M750.5 537v2M756.5 537v2M761.5 537v2M767.5 537v2M772.5 536v3M778.5 537v2M783.5 537v2M789.5 537v2M794.5 537v2M800.5 536v6M805.5 537v2M811.5 537v2M816.5 537v2M822.5 537v2M827.5 536v3M833.5 537v2M838.5 537v2M844.5 537v2M850.5 537v2M855.5 536v6" stroke="#000" stroke-width="1" fill="none"/><text x="27.9" y="547.5" font-family="Liberation Sans, sans-serif" font-size="9" fill="#000" stroke="#000" stroke-width="0.25">00:00:00</text><text x="83.2" y="547.5" font-family="Liberation Sans, sans-serif" font-size="9" fill="#000" stroke="#000" stroke-width="0.25">00:00:20</text><text x="138.5" y="547.5" font-family="Liberation Sans, sans-serif" font-size="9" fill="#000" stroke="#000" stroke-width="0.25">00:00:40</text><text x="193.7" y="547.5" font-family="Liberation Sans, sans-serif" font-size="9" fill="#000" stroke="#000" stroke-width="0.25">00:01:00</text><text x="249.0" y="547.5" font-family="Liberation Sans, sans-serif" font-size="9" fill="#000" stroke="#000" stroke-width="0.25">00:01:20</text><text x="304.3" y="547.5" font-family="Liberation Sans, sans-serif" font-size="9" fill="#000" stroke="#000" stroke-width="0.25">00:01:40</text><text x="359.5" y="547.5" font-family="Liberation Sans, sans-serif" font-size="9" fill="#000" stroke="#000" stroke-width="0.25">00:02:00</text><text x="414.8" y="547.5" font-family="Liberation Sans, sans-serif" font-size="9" fill="#000" stroke="#000" stroke-width="0.25">00:02:20</text><text x="470.1" y="547.5" font-family="Liberation Sans, sans-serif" font-size="9" fill="#000" stroke="#000" stroke-width="0.25">00:02:40</text><text x="525.3" y="547.5" font-family="Liberation Sans, sans-serif" font-size="9" fill="#000" stroke="#000" stroke-width="0.25">00:03:00</text><text x="580.6" y="547.5" font-family="Liberation Sans, sans-serif" font-size="9" fill="#000" stroke="#000" stroke-width="0.25">00:03:20</text><text x="635.9" y="547.5" font-family="Liberation Sans, sans-serif" font-size="9" fill="#000" stroke="#000" stroke-width="0.25">00:03:40</text><text x="691.1" y="547.5" font-family="Liberation Sans, sans-serif" font-size="9" fill="#000" stroke="#000" stroke-width="0.25">00:04:00</text><text x="746.4" y="547.5" font-family="Liberation Sans, sans-serif" font-size="9" fill="#000" stroke="#000" stroke-width="0.25">00:04:20</text><text x="801.7" y="547.5" font-family="Liberation Sans, sans-serif" font-size="9" fill="#000" stroke="#000" stroke-width="0.25">00:04:40</text></svg>
<div style="left:25px;top:549px;width:833px;height:2px;background:#fff"></div>
<div style="left:4px;top:557px;width:878px;height:1px;background:#fff"></div>
<div style="left:4px;top:559px;width:70px;height:16px;border:1px solid;border-color:#808080 #fff #fff #808080;"></div>
<div style="left:75px;top:559px;width:119px;height:16px;border:1px solid;border-color:#808080 #fff #fff #808080;"></div>
<div style="left:195px;top:559px;width:299px;height:16px;border:1px solid;border-color:#808080 #fff #fff #808080;"></div>
<div style="left:495px;top:559px;width:387px;height:16px;border:1px solid;border-color:#808080 #fff #fff #808080;"></div>
<div class="t" style="left:17px;top:560px;font-size:12px;line-height:14px;font-family:'Liberation Serif','Noto Sans CJK TC',sans-serif;font-weight:500;">立體聲</div>
<div class="t sans" style="left:109.5px;top:561px;font-size:11px;line-height:13px;">5:00.000</div>
<div class="t sans" style="left:270px;top:561px;font-size:11px;line-height:13px;">0.000 <span style="position:static;font-family:'Liberation Serif','Noto Sans CJK TC',sans-serif;font-weight:500;font-size:12px">到</span> 5:00.000 (5:00.000)</div>
<div class="t" style="left:498px;top:560px;font-size:12px;line-height:14px;font-family:'Liberation Serif','Noto Sans CJK TC',sans-serif;font-weight:500;"><span class="sans" style="position:static;font-size:11px">77</span>：未註冊限制使用量</div>
<div style="left:66px;top:562px;width:6px;height:9px;border:1px solid #000;"><div style="left:1px;top:2px;width:2px;height:1px;background:#000"></div><div style="left:1px;top:4px;width:2px;height:1px;background:#000"></div></div>
<div style="left:186px;top:562px;width:6px;height:9px;border:1px solid #000;"><div style="left:1px;top:2px;width:2px;height:1px;background:#000"></div><div style="left:1px;top:4px;width:2px;height:1px;background:#000"></div></div>
<div style="left:486px;top:562px;width:6px;height:9px;border:1px solid #000;"><div style="left:1px;top:2px;width:2px;height:1px;background:#000"></div><div style="left:1px;top:4px;width:2px;height:1px;background:#000"></div></div>
<div style="left:4px;top:577px;width:878px;height:16px;border:1px solid;border-color:#808080 #fff #fff #808080;"></div>
<div class="t" style="left:5.5px;top:578px;font-size:11px;line-height:13px;font-family:'Liberation Serif','Noto Sans CJK TC',sans-serif;font-weight:500;">暫停錄音</div>
<svg style="left:870px;top:581px" width="12" height="12" viewBox="0 0 12 12"><path d="M11.5 1.5L1.5 11.5M11.5 5.5L5.5 11.5M11.5 9.5L9.5 11.5" stroke="#808080" stroke-width="1.6"/><path d="M11.5 0.3L0.3 11.5M11.5 4.3L4.3 11.5M11.5 8.3L8.3 11.5" stroke="#fff" stroke-width="0.9"/></svg>
<svg style="left:229px;top:119px" width="14" height="22" viewBox="0 0 14 22"><path d="M1 1V17L5 13.5L8 20.5L10.5 19.5L7.5 12.5H12.5Z" fill="#fff" stroke="#000" stroke-width="1"/></svg>
</div></body></html>
